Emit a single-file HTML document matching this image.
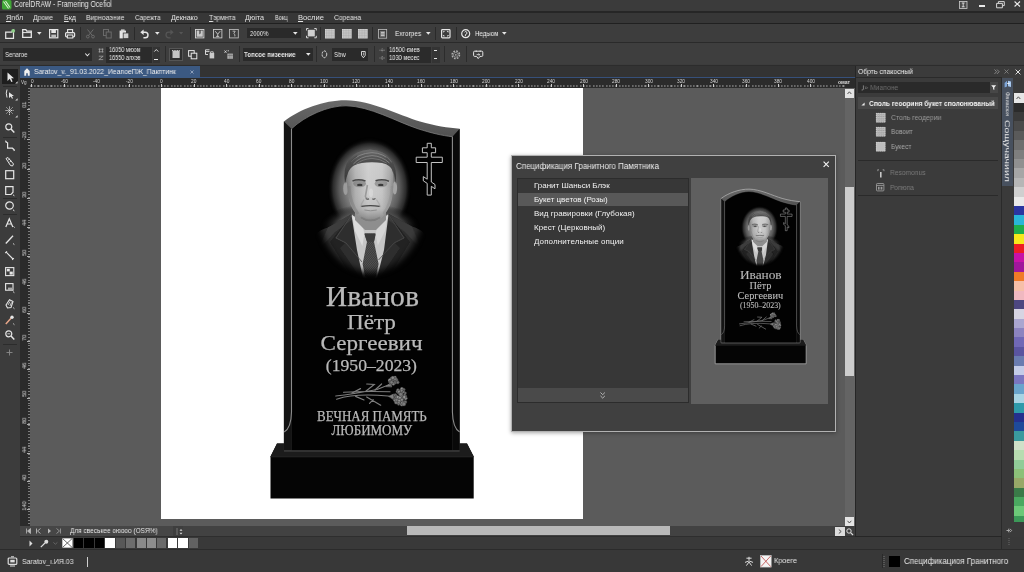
<!DOCTYPE html><html lang="ru"><head><meta charset="utf-8"><title>CorelDRAW</title><style>
html,body{margin:0;padding:0;}
body{width:1024px;height:572px;overflow:hidden;background:#3c3c3c;position:relative;font-family:"Liberation Sans",sans-serif;}
.t{position:absolute;white-space:nowrap;line-height:1;will-change:transform;}
.r{position:absolute;}
svg{position:absolute;overflow:visible;}
</style></head><body>
<div class="r" style="left:0px;top:0px;width:1024px;height:11px;background:#3b3b3b;"></div>
<div class="r" style="left:0px;top:11px;width:1024px;height:1.5px;background:#262626;"></div>
<svg style="left:2px;top:0px" width="10" height="10" viewBox="0 0 10 10"><rect x="0" y="0" width="9.5" height="9.5" rx="1.5" fill="#3fa535"/><path d="M1.5 1.5 L6.5 8.5 M3.5 1 L8 7.5" stroke="#d9f0d0" stroke-width="1.1" fill="none"/></svg>
<span class="t" style="left:14.00px;top:0.85px;font-size:8.2px;color:#e8e8e8;font-weight:normal;font-family:'Liberation Sans',sans-serif;transform-origin:0 50%;transform:scaleX(0.8391);">CorelDRAW - Framering Ocefiol</span>
<svg style="left:958.8px;top:0.7px" width="8.4" height="7.8" viewBox="0 0 8.4 7.8"><rect x="0.4" y="0.4" width="7.6" height="7" fill="#4a4a4a" stroke="#cfcfcf" stroke-width="0.8"/><path d="M2.8 2h2.8M4.2 2v3.8M2.8 5.8h2.8" stroke="#e0e0e0" stroke-width="0.9" fill="none"/></svg>
<div class="r" style="left:979.2px;top:5px;width:6px;height:1.5px;background:#e8e8e8;"></div>
<svg style="left:996px;top:0.6px" width="9" height="7.4" viewBox="0 0 9 7.4"><path d="M2.4 2.2V0.6H8.3V4.6H6.6M0.6 2.4H6.4V6.8H0.6Z" stroke="#d8d8d8" stroke-width="1" fill="none"/></svg>
<svg style="left:1013.6px;top:1.2px" width="6.6" height="6" viewBox="0 0 6.6 6"><path d="M0.6 0.5L6 5.5M6 0.5L0.6 5.5" stroke="#ececec" stroke-width="1.1" fill="none"/></svg>
<div class="r" style="left:0px;top:12.5px;width:1024px;height:10.5px;background:#373737;"></div>
<div class="r" style="left:0px;top:23px;width:1024px;height:1.3px;background:#202020;"></div>
<span class="t" style="left:5.70px;top:13.98px;font-size:7.2px;color:#e2e2e2;font-weight:normal;font-family:'Liberation Sans',sans-serif;letter-spacing:0.024px;"><u>Я</u>nбл</span>
<span class="t" style="left:33.00px;top:13.98px;font-size:7.2px;color:#e2e2e2;font-weight:normal;font-family:'Liberation Sans',sans-serif;transform-origin:0 50%;transform:scaleX(0.9565);">Дроие</span>
<span class="t" style="left:63.50px;top:13.98px;font-size:7.2px;color:#e2e2e2;font-weight:normal;font-family:'Liberation Sans',sans-serif;letter-spacing:-0.025px;"><u>Б</u>кд</span>
<span class="t" style="left:85.80px;top:13.98px;font-size:7.2px;color:#e2e2e2;font-weight:normal;font-family:'Liberation Sans',sans-serif;transform-origin:0 50%;transform:scaleX(0.9509);">Вирноаэние</span>
<span class="t" style="left:134.50px;top:13.98px;font-size:7.2px;color:#e2e2e2;font-weight:normal;font-family:'Liberation Sans',sans-serif;transform-origin:0 50%;transform:scaleX(0.8719);">Сарежта</span>
<span class="t" style="left:170.80px;top:13.98px;font-size:7.2px;color:#e2e2e2;font-weight:normal;font-family:'Liberation Sans',sans-serif;letter-spacing:-0.078px;">Декнако</span>
<span class="t" style="left:208.50px;top:13.98px;font-size:7.2px;color:#e2e2e2;font-weight:normal;font-family:'Liberation Sans',sans-serif;transform-origin:0 50%;transform:scaleX(0.9390);"><u>Т</u>эрмнта</span>
<span class="t" style="left:245.00px;top:13.98px;font-size:7.2px;color:#e2e2e2;font-weight:normal;font-family:'Liberation Sans',sans-serif;letter-spacing:-0.019px;">Дюіта</span>
<span class="t" style="left:274.90px;top:13.98px;font-size:7.2px;color:#e2e2e2;font-weight:normal;font-family:'Liberation Sans',sans-serif;transform-origin:0 50%;transform:scaleX(0.7835);">Вокц</span>
<span class="t" style="left:298.00px;top:13.98px;font-size:7.2px;color:#e2e2e2;font-weight:normal;font-family:'Liberation Sans',sans-serif;transform-origin:0 50%;transform:scaleX(1.0555);"><u>В</u>ослие</span>
<span class="t" style="left:334.00px;top:13.98px;font-size:7.2px;color:#e2e2e2;font-weight:normal;font-family:'Liberation Sans',sans-serif;transform-origin:0 50%;transform:scaleX(0.9248);">Сореана</span>
<div class="r" style="left:0px;top:24.3px;width:1024px;height:17.7px;background:#3d3d3d;"></div>
<div class="r" style="left:0px;top:42px;width:1024px;height:1.2px;background:#2a2a2a;"></div>
<div class="r" style="left:0px;top:43.2px;width:1024px;height:21.3px;background:#3e3e3e;"></div>
<div class="r" style="left:0px;top:64.5px;width:1024px;height:1px;background:#2c2c2c;"></div>
<div class="r" style="left:0px;top:65.5px;width:1024px;height:13px;background:#333333;"></div>
<div class="r" style="left:79.5px;top:27px;width:1px;height:13px;background:#2a2a2a;"></div>
<div class="r" style="left:134px;top:27px;width:1px;height:13px;background:#2a2a2a;"></div>
<div class="r" style="left:189.7px;top:27px;width:1px;height:13px;background:#2a2a2a;"></div>
<div class="r" style="left:320.4px;top:27px;width:1px;height:13px;background:#2a2a2a;"></div>
<div class="r" style="left:372.4px;top:27px;width:1px;height:13px;background:#2a2a2a;"></div>
<div class="r" style="left:435.4px;top:27px;width:1px;height:13px;background:#2a2a2a;"></div>
<div class="r" style="left:455.5px;top:27px;width:1px;height:13px;background:#2a2a2a;"></div>
<svg style="left:4.5px;top:28.5px" width="11" height="10" viewBox="0 0 11 10"><path d="M0.7 3.2H6.5L8.5 1.2V9.3H0.7Z" stroke="#e6e6e6" stroke-width="1.2" fill="none"/><circle cx="8.2" cy="1.8" r="1.9" fill="#8fd08a"/></svg>
<svg style="left:22px;top:29px" width="10" height="9" viewBox="0 0 10 9"><path d="M0.7 8.3V0.7H3.8L4.8 2.2H9.3V8.3Z" stroke="#e6e6e6" stroke-width="1.3" fill="none"/><path d="M0.7 3.6H9.3" stroke="#e6e6e6" stroke-width="1"/></svg>
<svg style="left:37px;top:32px" width="5" height="3" viewBox="0 0 5 3"><path d="M0 0H4.6L2.3 2.8Z" fill="#e6e6e6"/></svg>
<svg style="left:48.8px;top:29px" width="10" height="9.5" viewBox="0 0 10 9.5"><rect x="0.6" y="0.6" width="8.2" height="8.2" stroke="#e6e6e6" stroke-width="1.2" fill="none"/><rect x="2.3" y="0.8" width="4.6" height="3.2" fill="#e6e6e6"/><rect x="2.3" y="5.6" width="4.8" height="3" fill="#bbb"/></svg>
<svg style="left:64.8px;top:29px" width="10.5" height="9.5" viewBox="0 0 10.5 9.5"><rect x="2.6" y="0.6" width="5" height="3" stroke="#e6e6e6" stroke-width="1.1" fill="none"/><rect x="0.6" y="3.6" width="9" height="4.2" rx="1" stroke="#e6e6e6" stroke-width="1.2" fill="none"/><rect x="2.4" y="6" width="5.4" height="3" fill="#3d3d3d" stroke="#e6e6e6" stroke-width="1"/></svg>
<svg style="left:85.6px;top:29px" width="9" height="9.5" viewBox="0 0 9 9.5"><path d="M1.5 0.5L6.3 6.5M7.3 0.5L2.5 6.5" stroke="#6a6a6a" stroke-width="1"/><circle cx="1.8" cy="7.6" r="1.4" stroke="#6a6a6a" fill="none"/><circle cx="7" cy="7.6" r="1.4" stroke="#6a6a6a" fill="none"/></svg>
<svg style="left:102.6px;top:29px" width="9" height="9.5" viewBox="0 0 9 9.5"><rect x="0.5" y="0.5" width="5" height="6" stroke="#6a6a6a" fill="none"/><rect x="3.2" y="3" width="5" height="6" stroke="#6a6a6a" fill="#3d3d3d"/></svg>
<svg style="left:119px;top:28.8px" width="10.5" height="10" viewBox="0 0 10.5 10"><rect x="0.6" y="1.6" width="6.4" height="7.8" fill="#e6e6e6"/><rect x="2" y="0.4" width="3.6" height="2" fill="#cfcfcf"/><rect x="4.2" y="4" width="5.6" height="5.6" fill="#cfcfcf" stroke="#3d3d3d" stroke-width="0.8"/></svg>
<svg style="left:140.3px;top:28.6px" width="9" height="10" viewBox="0 0 9 10"><path d="M0.3 3.2L3.6 0.4V6Z" fill="#e6e6e6"/><path d="M3 3.2H5.2A2.7 2.7 0 0 1 5.2 8.8H3.4" stroke="#e6e6e6" stroke-width="1.4" fill="none"/></svg>
<svg style="left:154.5px;top:32px" width="5" height="3" viewBox="0 0 5 3"><path d="M0 0H4.6L2.3 2.8Z" fill="#e6e6e6"/></svg>
<svg style="left:164.8px;top:28.6px" width="9" height="10" viewBox="0 0 9 10"><path d="M8.7 3.2L5.4 0.4V6Z" fill="#555"/><path d="M6 3.2H3.8A2.7 2.7 0 0 0 3.8 8.8H5.6" stroke="#555" stroke-width="1.3" fill="none"/></svg>
<svg style="left:179px;top:32px" width="5" height="3" viewBox="0 0 5 3"><path d="M0 0H4.2L2.1 2.5Z" fill="#555"/></svg>
<svg style="left:194.7px;top:28.8px" width="9.5" height="9.5" viewBox="0 0 9.5 9.5"><rect x="0.5" y="0.5" width="8.4" height="8.4" stroke="#d8d8d8" stroke-width="0.9" fill="#3d3d3d"/><path d="M1.6 1.4H4.4V5.6L5.6 4.2V1.4H7.8V7.8H1.6Z" fill="#c8c8c8"/></svg>
<svg style="left:213px;top:28.8px" width="9.5" height="9.5" viewBox="0 0 9.5 9.5"><rect x="0.5" y="0.5" width="8.4" height="8.4" stroke="#cfcfcf" stroke-width="0.85" fill="none"/><path d="M2.2 2.2L4.7 5.2 7.2 2.2M4.7 5.2V7.4M3.2 7.4H6.2" stroke="#cfcfcf" stroke-width="0.9" fill="none"/></svg>
<svg style="left:229px;top:28.8px" width="10" height="9.5" viewBox="0 0 10 9.5"><rect x="0.5" y="0.5" width="8.8" height="8.4" stroke="#bdbdbd" stroke-width="0.85" fill="none"/><path d="M3.6 2.2H6.2L4.8 4.6Q6.6 5.4 5.8 7.4" stroke="#bdbdbd" stroke-width="0.9" fill="none"/></svg>
<div class="r" style="left:247px;top:28.1px;width:54px;height:10.4px;background:#2a2a2a;"></div>
<span class="t" style="left:249.50px;top:29.92px;font-size:7.7px;color:#e8e8e8;font-weight:normal;font-family:'Liberation Sans',sans-serif;transform-origin:0 50%;transform:scaleX(0.7716);">2000%</span>
<svg style="left:293.3px;top:32px" width="5" height="3" viewBox="0 0 5 3"><path d="M0 0H4.6L2.3 2.8Z" fill="#e6e6e6"/></svg>
<svg style="left:305.7px;top:28.2px" width="11" height="10.5" viewBox="0 0 11 10.5"><rect x="1.8" y="1.8" width="7" height="6.6" fill="#cfcfcf"/><path d="M0.5 2.5V0.5H2.5M8.3 0.5H10.3V2.5M10.3 7.8V9.8H8.3M2.5 9.8H0.5V7.8" stroke="#e6e6e6" stroke-width="0.9" fill="none"/></svg>
<svg style="left:325px;top:28.8px" width="9.7" height="9.5" viewBox="0 0 9.7 9.5"><rect x="0" y="0" width="9.7" height="9.5" fill="#d6d6d6"/><path d="M1.6 0V9.5M0 1.6H9.7" stroke="#8a8a8a" stroke-width="0.3"/><path d="M3.2 0V9.5M0 3.2H9.7" stroke="#8a8a8a" stroke-width="0.3"/><path d="M4.8 0V9.5M0 4.8H9.7" stroke="#8a8a8a" stroke-width="0.3"/><path d="M6.4 0V9.5M0 6.4H9.7" stroke="#8a8a8a" stroke-width="0.3"/><path d="M8.0 0V9.5M0 8.0H9.7" stroke="#8a8a8a" stroke-width="0.3"/></svg>
<svg style="left:341.8px;top:28.8px" width="9.7" height="9.5" viewBox="0 0 9.7 9.5"><rect x="0" y="0" width="9.7" height="9.5" fill="#d6d6d6"/><path d="M1.6 0V9.5M0 1.6H9.7" stroke="#8a8a8a" stroke-width="0.3"/><path d="M3.2 0V9.5M0 3.2H9.7" stroke="#8a8a8a" stroke-width="0.3"/><path d="M4.8 0V9.5M0 4.8H9.7" stroke="#8a8a8a" stroke-width="0.3"/><path d="M6.4 0V9.5M0 6.4H9.7" stroke="#8a8a8a" stroke-width="0.3"/><path d="M8.0 0V9.5M0 8.0H9.7" stroke="#8a8a8a" stroke-width="0.3"/></svg>
<svg style="left:358px;top:28.8px" width="9.7" height="9.5" viewBox="0 0 9.7 9.5"><rect x="0" y="0" width="9.7" height="9.5" fill="#d6d6d6"/><path d="M1.6 0V9.5M0 1.6H9.7" stroke="#8a8a8a" stroke-width="0.3"/><path d="M3.2 0V9.5M0 3.2H9.7" stroke="#8a8a8a" stroke-width="0.3"/><path d="M4.8 0V9.5M0 4.8H9.7" stroke="#8a8a8a" stroke-width="0.3"/><path d="M6.4 0V9.5M0 6.4H9.7" stroke="#8a8a8a" stroke-width="0.3"/><path d="M8.0 0V9.5M0 8.0H9.7" stroke="#8a8a8a" stroke-width="0.3"/></svg>
<svg style="left:377.8px;top:28.8px" width="9.2" height="9.7" viewBox="0 0 9.2 9.7"><rect x="0.5" y="0.5" width="8.2" height="8.7" stroke="#bdbdbd" stroke-width="0.8" fill="none"/><rect x="2.2" y="2" width="4.8" height="5.8" fill="#7c7c7c"/><path d="M3 3.5H6.5M3 5H6.5M3 6.5H6.5" stroke="#eee" stroke-width="0.6"/></svg>
<span class="t" style="left:394.70px;top:29.76px;font-size:8px;color:#ececec;font-weight:normal;font-family:'Liberation Sans',sans-serif;transform-origin:0 50%;transform:scaleX(0.8216);">Exrorpes</span>
<svg style="left:425.5px;top:32px" width="5" height="3" viewBox="0 0 5 3"><path d="M0 0H4.6L2.3 2.8Z" fill="#e6e6e6"/></svg>
<svg style="left:441px;top:28.8px" width="9.6" height="9.4" viewBox="0 0 9.6 9.4"><rect x="0.6" y="0.6" width="8.4" height="8.2" rx="0.8" stroke="#e6e6e6" stroke-width="1.2" fill="none"/><path d="M2.4 3.4V2.4H3.6M6 2.4H7.2V3.4M7.2 6V7H6M3.6 7H2.4V6" stroke="#e6e6e6" stroke-width="0.9" fill="none"/></svg>
<svg style="left:461px;top:28.7px" width="9.4" height="9.4" viewBox="0 0 9.4 9.4"><circle cx="4.7" cy="4.7" r="4" stroke="#e6e6e6" stroke-width="1.2" fill="none"/><path d="M3.6 3.2Q4.8 1.6 5.8 3.2T4.4 5.6V7.2" stroke="#e6e6e6" stroke-width="1" fill="none"/></svg>
<span class="t" style="left:474.60px;top:29.76px;font-size:8px;color:#ececec;font-weight:normal;font-family:'Liberation Sans',sans-serif;transform-origin:0 50%;transform:scaleX(0.7693);">Недыом</span>
<svg style="left:502.3px;top:32px" width="5" height="3" viewBox="0 0 5 3"><path d="M0 0H4.6L2.3 2.8Z" fill="#e6e6e6"/></svg>
<div class="r" style="left:164.5px;top:46px;width:1px;height:16px;background:#2c2c2c;"></div>
<div class="r" style="left:239.4px;top:46px;width:1px;height:16px;background:#2c2c2c;"></div>
<div class="r" style="left:315.8px;top:46px;width:1px;height:16px;background:#2c2c2c;"></div>
<div class="r" style="left:374.3px;top:46px;width:1px;height:16px;background:#2c2c2c;"></div>
<div class="r" style="left:444px;top:46px;width:1px;height:16px;background:#2c2c2c;"></div>
<div class="r" style="left:466.4px;top:46px;width:1px;height:16px;background:#2c2c2c;"></div>
<div class="r" style="left:3.3px;top:48px;width:89.2px;height:12.6px;background:#2a2a2a;"></div>
<span class="t" style="left:5.30px;top:51.01px;font-size:7.9px;color:#e6e6e6;font-weight:normal;font-family:'Liberation Sans',sans-serif;transform-origin:0 50%;transform:scaleX(0.7500);">Senaroe</span>
<svg style="left:85.3px;top:53px" width="5" height="4" viewBox="0 0 5 4"><path d="M0.3 0.5L2.4 2.8 4.5 0.5" stroke="#e6e6e6" stroke-width="1.1" fill="none"/></svg>
<svg style="left:98px;top:48px" width="7" height="13" viewBox="0 0 7 13"><path d="M0.5 1.2H5.5M0.5 3.8H5.5M1.5 0.5V4.5M4.5 0.5V4.5" stroke="#aaa" stroke-width="0.7"/><path d="M0.8 8.2H5.2L0.8 11.6H5.2" stroke="#aaa" stroke-width="0.7" fill="none"/></svg>
<div class="r" style="left:106.4px;top:46.6px;width:46px;height:16px;background:#2b2b2b;"></div>
<span class="t" style="left:109.00px;top:46.85px;font-size:6.7px;color:#f0f0f0;font-weight:normal;font-family:'Liberation Sans',sans-serif;transform-origin:0 50%;transform:scaleX(0.8218);">16050 мюом</span>
<span class="t" style="left:109.00px;top:55.05px;font-size:6.7px;color:#f0f0f0;font-weight:normal;font-family:'Liberation Sans',sans-serif;transform-origin:0 50%;transform:scaleX(0.8218);">16550 алхэв</span>
<div class="r" style="left:152.8px;top:46.6px;width:7px;height:16px;background:#343434;"></div>
<svg style="left:154px;top:48.5px" width="5" height="3" viewBox="0 0 5 3"><path d="M0.3 2.6L2.3 0.5 4.3 2.6" stroke="#e6e6e6" stroke-width="0.9" fill="none"/></svg>
<div class="r" style="left:154.3px;top:58.6px;width:4px;height:1.2px;background:#e6e6e6;"></div>
<div class="r" style="left:169px;top:47.6px;width:13.7px;height:13.6px;background:#2f2f2f;box-shadow:inset 0 0 0 1px #555;"></div>
<svg style="left:172px;top:50px" width="8.2" height="8.6" viewBox="0 0 8.2 8.6"><rect x="0.5" y="0.8" width="7.2" height="7.2" fill="#c4c4c4"/><path d="M0 0.6H8.2" stroke="#e6e6e6" stroke-width="0.9" stroke-dasharray="1 0.7"/></svg>
<svg style="left:188px;top:49.6px" width="9.5" height="9.5" viewBox="0 0 9.5 9.5"><rect x="0.6" y="0.6" width="5.6" height="5.6" stroke="#e6e6e6" stroke-width="1" fill="none"/><rect x="3.2" y="3.2" width="5.6" height="5.6" stroke="#e6e6e6" stroke-width="1" fill="#3e3e3e"/></svg>
<svg style="left:205.4px;top:49.2px" width="10" height="10" viewBox="0 0 10 10"><path d="M0.5 0.8H4.5M0.5 2.6H4.5M0.5 0.8V5.5H3" stroke="#e6e6e6" stroke-width="0.9" fill="none"/><rect x="4.6" y="4" width="4.6" height="5.4" fill="#ccc"/><path d="M5.6 4V2.8H8.2V4" stroke="#e6e6e6" stroke-width="0.8" fill="none"/></svg>
<svg style="left:224.3px;top:49.6px" width="9.5" height="9.5" viewBox="0 0 9.5 9.5"><path d="M0.5 0.5L2.5 2.8M2.5 0.5L0.5 2.8M3.6 0.8H5" stroke="#e6e6e6" stroke-width="0.8"/><rect x="3.4" y="3.6" width="5.4" height="5.2" fill="#bbb"/><path d="M3.4 5.4H8.8M5.2 3.6V8.8M7 3.6V8.8" stroke="#555" stroke-width="0.5"/></svg>
<div class="r" style="left:242.5px;top:48px;width:70px;height:12.6px;background:#2a2a2a;"></div>
<span class="t" style="left:244.40px;top:51.07px;font-size:7.8px;color:#e6e6e6;font-weight:bold;font-family:'Liberation Sans',sans-serif;transform-origin:0 50%;transform:scaleX(0.7920);">Топсое пизеение</span>
<svg style="left:305.7px;top:53.2px" width="5" height="3" viewBox="0 0 5 3"><path d="M0 0H4.6L2.3 2.8Z" fill="#e6e6e6"/></svg>
<svg style="left:320.6px;top:50.2px" width="7" height="8.6" viewBox="0 0 7 8.6"><ellipse cx="3.4" cy="4.3" rx="2.3" ry="3.4" stroke="#e6e6e6" stroke-width="1" fill="none" stroke-dasharray="2.2 1"/></svg>
<div class="r" style="left:331.9px;top:48px;width:36px;height:12.6px;background:#2a2a2a;"></div>
<span class="t" style="left:334.30px;top:51.12px;font-size:7.7px;color:#e6e6e6;font-weight:normal;font-family:'Liberation Sans',sans-serif;transform-origin:0 50%;transform:scaleX(0.7811);">Sbw</span>
<svg style="left:360.6px;top:51px" width="5" height="7.4" viewBox="0 0 5 7.4"><path d="M0.5 0.5H4.2V4.4L2.4 6.8 0.5 4.4Z" stroke="#e6e6e6" stroke-width="0.9" fill="none"/><path d="M2.4 1.5V4.5" stroke="#e6e6e6" stroke-width="0.7"/></svg>
<svg style="left:378.5px;top:48px" width="7" height="13" viewBox="0 0 7 13"><path d="M0.5 2.2H6M3.2 0.4V4.2" stroke="#aaa" stroke-width="0.7" stroke-dasharray="1 0.6"/><path d="M0.5 10H6M3.2 8V12" stroke="#aaa" stroke-width="0.7" stroke-dasharray="1 0.6"/></svg>
<div class="r" style="left:387px;top:46.6px;width:44.4px;height:16px;background:#2b2b2b;"></div>
<span class="t" style="left:389.30px;top:46.85px;font-size:6.7px;color:#f0f0f0;font-weight:normal;font-family:'Liberation Sans',sans-serif;transform-origin:0 50%;transform:scaleX(0.8575);">16500 ємев</span>
<span class="t" style="left:389.30px;top:55.05px;font-size:6.7px;color:#f0f0f0;font-weight:normal;font-family:'Liberation Sans',sans-serif;transform-origin:0 50%;transform:scaleX(0.8614);">1030 месес</span>
<div class="r" style="left:431.8px;top:46.6px;width:8.2px;height:16px;background:#343434;"></div>
<div class="r" style="left:433.8px;top:49.8px;width:3.6px;height:1px;background:#e0e0e0;"></div>
<div class="r" style="left:433.8px;top:58.4px;width:3.6px;height:1px;background:#e0e0e0;"></div>
<svg style="left:450.7px;top:49.6px" width="9.6" height="9.6" viewBox="0 0 9.6 9.6"><circle cx="4.8" cy="4.8" r="3.7" stroke="#b0b0b0" stroke-width="1.5" fill="none" stroke-dasharray="1.7 1.2"/><circle cx="4.8" cy="4.8" r="2.4" stroke="#a8a8a8" stroke-width="0.7" fill="none"/><circle cx="4.8" cy="4.8" r="0.9" fill="#a8a8a8"/></svg>
<svg style="left:473px;top:49.8px" width="10.4" height="9.4" viewBox="0 0 10.4 9.4"><path d="M1.6 1.2H8.8Q9.8 1.2 9.8 2.2V5.4Q9.8 6.4 8.8 6.4H7L5.2 8.6 3.6 6.4H1.6Q0.6 6.4 0.6 5.4V2.2Q0.6 1.2 1.6 1.2Z" stroke="#e6e6e6" stroke-width="1" fill="none"/><path d="M3.2 0.4V2M7.2 0.4V2M3.6 4.6H6.8M5.6 3.4L6.8 4.6 5.6 5.6" stroke="#e6e6e6" stroke-width="0.8" fill="none"/></svg>
<div class="r" style="left:20px;top:66px;width:180px;height:12.4px;background:#3b5982;"></div>
<svg style="left:24px;top:67.6px" width="6" height="8" viewBox="0 0 6 8"><path d="M3 0.3L5.7 3V7.7H3.8V5.2H2.2V7.7H0.3V3Z" fill="#f0f0f0"/></svg>
<span class="t" style="left:34.00px;top:68.48px;font-size:7.4px;color:#f0f0f0;font-weight:normal;font-family:'Liberation Sans',sans-serif;transform-origin:0 50%;transform:scaleX(0.9235);">Saratov_v._91.03.2022_ИeanoeПЖ_Пакптинк</span>
<svg style="left:189.6px;top:70.2px" width="4" height="4" viewBox="0 0 4 4"><path d="M0.5 0.5L3.5 3.5M3.5 0.5L0.5 3.5" stroke="#9fb0c8" stroke-width="0.8"/></svg>
<div class="r" style="left:200px;top:77.2px;width:655px;height:0.9px;background:#36507a;"></div>
<div class="r" style="left:0px;top:65.5px;width:20px;height:484px;background:#3c3c3c;"></div>
<div class="r" style="left:2.3px;top:68.5px;width:15.7px;height:15.2px;background:#1e1e1e;"></div>
<svg style="left:5.2px;top:71.8px" width="10" height="10" viewBox="0 0 10 10"><path d="M2.5 0.5V9L4.8 6.8 6.3 10 7.6 9.4 6.2 6.3H9Z" fill="#e6e6e6"/></svg>
<svg style="left:15.2px;top:80.8px" width="3" height="3" viewBox="0 0 3 3"><path d="M2.6 0.2V2.6H0.2Z" fill="#d8d8d8"/></svg>
<svg style="left:5.2px;top:89px" width="10" height="10" viewBox="0 0 10 10"><path d="M2 0.5Q0.5 4 2 8.5" stroke="#e6e6e6" stroke-width="1" fill="none"/><path d="M4 3.2V9L5.8 7.4 7 9.8 8 9.3 6.9 7H9Z" fill="#e6e6e6"/></svg>
<svg style="left:15.2px;top:98px" width="3" height="3" viewBox="0 0 3 3"><path d="M2.6 0.2V2.6H0.2Z" fill="#d8d8d8"/></svg>
<svg style="left:5.2px;top:106px" width="10" height="10" viewBox="0 0 10 10"><path d="M4.5 0.5V9M0.5 4.5H8.5M1.5 1.5L7.5 7.5M7.5 1.5L1.5 7.5" stroke="#e6e6e6" stroke-width="0.9" stroke-dasharray="1.2 0.6"/></svg>
<svg style="left:15.2px;top:115px" width="3" height="3" viewBox="0 0 3 3"><path d="M2.6 0.2V2.6H0.2Z" fill="#d8d8d8"/></svg>
<svg style="left:5.2px;top:123px" width="10" height="10" viewBox="0 0 10 10"><circle cx="3.8" cy="3.8" r="3" stroke="#e6e6e6" stroke-width="1.2" fill="none"/><path d="M6 6L9.3 9.5" stroke="#e6e6e6" stroke-width="1.5"/></svg>
<svg style="left:5.2px;top:141px" width="10" height="10" viewBox="0 0 10 10"><path d="M0.5 0.8L2.6 1.8V7.2H7.4L9.4 9" stroke="#e6e6e6" stroke-width="1.2" fill="none"/><path d="M0 0L1.6 0.4M8.6 9.6L10 9.2" stroke="#e6e6e6" stroke-width="0.9"/></svg>
<svg style="left:5.2px;top:157px" width="10" height="10" viewBox="0 0 10 10"><path d="M1 1.5L3 0.5 8.5 7 7.5 9 5.5 8.5Z" stroke="#e6e6e6" stroke-width="1" fill="none"/><path d="M3 3L5 2M4.5 5L6.5 4" stroke="#e6e6e6" stroke-width="0.8"/></svg>
<svg style="left:5.2px;top:170px" width="10" height="10" viewBox="0 0 10 10"><rect x="0.7" y="0.7" width="8" height="8" stroke="#e6e6e6" stroke-width="1.2" fill="none"/></svg>
<svg style="left:5.2px;top:186px" width="10" height="10" viewBox="0 0 10 10"><path d="M0.7 0.7H8V6.2L6 8.5H0.7Z" stroke="#e6e6e6" stroke-width="1.2" fill="none"/><path d="M8 8.8L9.4 9.8" stroke="#e6e6e6" stroke-width="1"/></svg>
<svg style="left:5.2px;top:201px" width="10" height="10" viewBox="0 0 10 10"><ellipse cx="4.5" cy="4.5" rx="3.8" ry="3.6" stroke="#e6e6e6" stroke-width="1.2" fill="none"/><path d="M8 8.8L9.4 9.8" stroke="#e6e6e6" stroke-width="1"/></svg>
<svg style="left:5.2px;top:217.6px" width="10" height="10" viewBox="0 0 10 10"><path d="M0.8 9L4.3 0.8 7.8 9M2.2 6H6.4" stroke="#e6e6e6" stroke-width="1.2" fill="none"/><path d="M8.6 8.4L9.6 9.6" stroke="#e6e6e6" stroke-width="0.9"/></svg>
<svg style="left:5.2px;top:235px" width="10" height="10" viewBox="0 0 10 10"><path d="M0.8 8.5L8 0.8" stroke="#e6e6e6" stroke-width="1.3"/><path d="M8 8.5L9.4 9.6" stroke="#e6e6e6" stroke-width="0.9"/></svg>
<svg style="left:5.2px;top:251px" width="10" height="10" viewBox="0 0 10 10"><path d="M1.2 1.2L8 8" stroke="#e6e6e6" stroke-width="1.1"/><path d="M0.3 2L2 0.3M7.2 8.8L8.8 7.2" stroke="#e6e6e6" stroke-width="1.1"/></svg>
<svg style="left:5.2px;top:267px" width="10" height="10" viewBox="0 0 10 10"><rect x="0.6" y="0.6" width="8.2" height="8" stroke="#e6e6e6" stroke-width="1.1" fill="none"/><rect x="1.8" y="1.8" width="3" height="2.6" fill="#e6e6e6"/><rect x="4.6" y="4.6" width="3.2" height="3" fill="#e6e6e6"/></svg>
<svg style="left:5.2px;top:283px" width="10" height="10" viewBox="0 0 10 10"><rect x="0.6" y="0.6" width="7.4" height="6.6" stroke="#e6e6e6" stroke-width="1.1" fill="none"/><rect x="3" y="4.6" width="4" height="2.8" fill="#aaa"/><path d="M8 8.6L9.4 9.7" stroke="#e6e6e6" stroke-width="0.9"/></svg>
<svg style="left:5.2px;top:299px" width="10" height="10" viewBox="0 0 10 10"><path d="M1 6L4.5 0.8 8 2.5 6 8.6 2.5 9Z" stroke="#e6e6e6" stroke-width="1.1" fill="none"/><path d="M3 6L5 2.5M5 7L6.5 3.4" stroke="#e6e6e6" stroke-width="0.8"/><path d="M8.2 8.6L9.4 9.7" stroke="#e6e6e6" stroke-width="0.9"/></svg>
<svg style="left:5.2px;top:315px" width="10" height="10" viewBox="0 0 10 10"><path d="M0.8 9L6 3.2" stroke="#e8a78a" stroke-width="1.5"/><circle cx="7" cy="2.2" r="1.7" fill="#e6e6e6"/><path d="M8.2 8.6L9.4 9.7" stroke="#e6e6e6" stroke-width="0.9"/></svg>
<svg style="left:5.2px;top:329.5px" width="10" height="10" viewBox="0 0 10 10"><circle cx="3.8" cy="3.8" r="3" stroke="#e6e6e6" stroke-width="1.2" fill="none"/><path d="M6 6L9.3 9.5" stroke="#e6e6e6" stroke-width="1.5"/><path d="M2.4 3.8H5.2" stroke="#e6e6e6" stroke-width="0.8"/></svg>
<svg style="left:5.2px;top:348px" width="10" height="10" viewBox="0 0 10 10"><path d="M4.5 1.5V7.5M1.5 4.5H7.5" stroke="#8a8a8a" stroke-width="0.9"/></svg>
<div class="r" style="left:3px;top:86px;width:14px;height:0.8px;background:#2c2c2c;"></div>
<div class="r" style="left:3px;top:137px;width:14px;height:0.8px;background:#2c2c2c;"></div>
<div class="r" style="left:3px;top:198px;width:14px;height:0.8px;background:#2c2c2c;"></div>
<div class="r" style="left:3px;top:214px;width:14px;height:0.8px;background:#2c2c2c;"></div>
<div class="r" style="left:3px;top:344px;width:14px;height:0.8px;background:#2c2c2c;"></div>
<div class="r" style="left:20px;top:526px;width:153px;height:10px;background:#464646;"></div>
<div class="r" style="left:173px;top:526px;width:682px;height:10px;background:#3e3e3e;"></div>
<div class="r" style="left:183px;top:526px;width:652px;height:10px;background:#424242;"></div>
<div class="r" style="left:407px;top:526.4px;width:263px;height:8.8px;background:#b9b9b9;"></div>
<svg style="left:26px;top:528px" width="5" height="6" viewBox="0 0 5 6"><path d="M0.5 0.5V5.5M4.5 0.5L1.5 3 4.5 5.5Z" stroke="#bbb" stroke-width="0.8" fill="#bbb"/></svg>
<svg style="left:36px;top:528px" width="5" height="6" viewBox="0 0 5 6"><path d="M0.5 0.5V5.5M4.5 0.5L1.5 3 4.5 5.5" stroke="#bbb" stroke-width="0.9" fill="none"/></svg>
<svg style="left:46.5px;top:528px" width="5" height="6" viewBox="0 0 5 6"><path d="M1 0.5L4 3 1 5.5Z" fill="#bbb"/></svg>
<svg style="left:56px;top:528px" width="5" height="6" viewBox="0 0 5 6"><path d="M0.5 0.5L3.5 3 0.5 5.5M4.5 0.5V5.5" stroke="#999" stroke-width="0.9" fill="none"/></svg>
<span class="t" style="left:70.30px;top:526.97px;font-size:7.6px;color:#e6e6e6;font-weight:normal;font-family:'Liberation Sans',sans-serif;transform-origin:0 50%;transform:scaleX(0.8554);">Для свеськее оюооо (OSЯ%)</span>
<svg style="left:176px;top:527.5px" width="7" height="8" viewBox="0 0 7 8"><path d="M1 0.5V7" stroke="#ccc" stroke-width="0.8" stroke-dasharray="1 1"/><path d="M3.5 2.8L5 1 6.5 2.8ZM3.5 4.8L5 6.6 6.5 4.8Z" fill="#ddd"/></svg>
<div class="r" style="left:835.4px;top:526.5px;width:9.4px;height:9px;background:#dcdcdc;"></div>
<svg style="left:838px;top:528.6px" width="4" height="5" viewBox="0 0 4 5"><path d="M0.8 0.5L3.2 2.5 0.8 4.5" stroke="#444" stroke-width="0.9" fill="none"/></svg>
<svg style="left:846px;top:527.5px" width="8" height="8" viewBox="0 0 8 8"><circle cx="3" cy="3" r="2.2" stroke="#ddd" stroke-width="1" fill="none"/><path d="M4.6 4.6L7 7" stroke="#ddd" stroke-width="1.2"/></svg>
<div class="r" style="left:20px;top:536px;width:1004px;height:13.4px;background:#393939;"></div>
<div class="r" style="left:20px;top:536px;width:835px;height:0.8px;background:#2e2e2e;"></div>
<svg style="left:29px;top:539.5px" width="4" height="7" viewBox="0 0 4 7"><path d="M0.5 0.5L3.5 3.5 0.5 6.5Z" fill="#ddd"/></svg>
<svg style="left:39.5px;top:538.5px" width="9" height="9" viewBox="0 0 9 9"><path d="M0.8 8.2L5 4" stroke="#ddd" stroke-width="1.2"/><circle cx="6.3" cy="2.7" r="2" fill="#ddd"/></svg>
<svg style="left:52.5px;top:541.5px" width="5" height="3" viewBox="0 0 5 3"><path d="M0.4 0.4L2.4 2.2 4.4 0.4" stroke="#6a6a6a" stroke-width="0.9" fill="none"/></svg>
<svg style="left:62.2px;top:538px" width="10.700000000000003" height="10" viewBox="0 0 10.700000000000003 10"><rect x="0.4" y="0.4" width="9.900000000000002" height="9.2" fill="#fff" stroke="#ccc" stroke-width="0.5"/><path d="M0.5 0.5L10.200000000000003 9.5M10.200000000000003 0.5L0.5 9.5" stroke="#444" stroke-width="0.8"/></svg>
<div class="r" style="left:73.6px;top:538px;width:9.700000000000003px;height:10px;background:#000;"></div>
<div class="r" style="left:84.3px;top:538px;width:9.700000000000003px;height:10px;background:#000;"></div>
<div class="r" style="left:94.7px;top:538px;width:9.700000000000003px;height:10px;background:#000;"></div>
<div class="r" style="left:105px;top:538px;width:9.799999999999997px;height:10px;background:#fff;"></div>
<div class="r" style="left:116px;top:538px;width:9px;height:10px;background:#585858;"></div>
<div class="r" style="left:126px;top:538px;width:9.199999999999989px;height:10px;background:#6d6d6d;"></div>
<div class="r" style="left:136.6px;top:538px;width:9.400000000000006px;height:10px;background:#8a8a8a;"></div>
<div class="r" style="left:146.8px;top:538px;width:9.399999999999977px;height:10px;background:#8e8e8e;"></div>
<div class="r" style="left:157px;top:538px;width:9.400000000000006px;height:10px;background:#6a6a6a;"></div>
<div class="r" style="left:167.6px;top:538px;width:9.400000000000006px;height:10px;background:#fff;"></div>
<div class="r" style="left:178px;top:538px;width:10px;height:10px;background:#fff;"></div>
<div class="r" style="left:189px;top:538px;width:9px;height:10px;background:#626262;"></div>
<div class="r" style="left:0px;top:549.4px;width:1024px;height:22.6px;background:#383838;"></div>
<div class="r" style="left:0px;top:549px;width:1024px;height:0.8px;background:#2b2b2b;"></div>
<svg style="left:6.5px;top:556px" width="11" height="11" viewBox="0 0 11 11"><rect x="1.2" y="2" width="8.6" height="6.4" rx="1" stroke="#ddd" stroke-width="1.2" fill="none"/><rect x="3.3" y="3.8" width="4.4" height="2.6" fill="#ddd"/><path d="M3 10H8M4 0.8H7" stroke="#ddd" stroke-width="1"/></svg>
<span class="t" style="left:22.00px;top:557.76px;font-size:8px;color:#e4e4e4;font-weight:normal;font-family:'Liberation Sans',sans-serif;transform-origin:0 50%;transform:scaleX(0.8713);">Saratov_ı.ИЯ.03</span>
<div class="r" style="left:86.7px;top:557px;width:1px;height:10px;background:#cfcfcf;"></div>
<svg style="left:743.5px;top:556px" width="10" height="11" viewBox="0 0 10 11"><path d="M5 0.8V4M2.4 2.2L7.6 2.2M1 6.4Q5 3.4 9 6.4M2.4 9.6L5 6 7.6 9.6" stroke="#ddd" stroke-width="1" fill="none"/></svg>
<svg style="left:759.5px;top:555.4px" width="11.7" height="12.6" viewBox="0 0 11.7 12.6"><rect x="0.5" y="0.5" width="10.7" height="11.6" fill="#f4f4f4" stroke="#ccc" stroke-width="0.6"/><path d="M1 1L10.7 11.6M10.7 1L1 11.6" stroke="#b44" stroke-width="0.8"/></svg>
<span class="t" style="left:774.40px;top:557.46px;font-size:8px;color:#e4e4e4;font-weight:normal;font-family:'Liberation Sans',sans-serif;transform-origin:0 50%;transform:scaleX(0.9128);">Кроеге</span>
<div class="r" style="left:881.5px;top:554px;width:1px;height:14px;background:#2a2a2a;"></div>
<svg style="left:882.8px;top:556px" width="2" height="11" viewBox="0 0 2 11"><path d="M1 0V11" stroke="#777" stroke-width="1" stroke-dasharray="1 1"/></svg>
<div class="r" style="left:889px;top:556px;width:11px;height:11px;background:#000;"></div>
<span class="t" style="left:904.00px;top:557.25px;font-size:8.4px;color:#e8e8e8;font-weight:normal;font-family:'Liberation Sans',sans-serif;transform-origin:0 50%;transform:scaleX(0.9549);">Спецификациоя Гранитного</span>
<div class="r" style="left:30px;top:88px;width:815px;height:438px;background:#5b5b5b;"></div>
<div class="r" style="left:20px;top:78.4px;width:835px;height:9.6px;background:#2b2b2b;"></div>
<div class="r" style="left:20px;top:88px;width:10px;height:438px;background:#2b2b2b;"></div>
<div class="r" style="left:30px;top:85.4px;width:816px;height:1.5px;background:repeating-linear-gradient(90deg,#909090 0,#909090 1.1px,transparent 1.1px,transparent 3.246px);background-position:1.4px 0;"></div>
<div class="r" style="left:31.4px;top:83.6px;width:1px;height:3.4px;background:#cfcfcf;"></div>
<span class="t" style="left:30.53px;top:80.26px;font-size:4.8px;color:#d4d4d4;font-weight:normal;font-family:'Liberation Sans',sans-serif;">0</span>
<div class="r" style="left:63.8px;top:83.6px;width:1px;height:3.4px;background:#cfcfcf;"></div>
<span class="t" style="left:60.85px;top:80.26px;font-size:4.8px;color:#d4d4d4;font-weight:normal;font-family:'Liberation Sans',sans-serif;">-60</span>
<div class="r" style="left:96.3px;top:83.6px;width:1px;height:3.4px;background:#cfcfcf;"></div>
<span class="t" style="left:93.31px;top:80.26px;font-size:4.8px;color:#d4d4d4;font-weight:normal;font-family:'Liberation Sans',sans-serif;">-40</span>
<div class="r" style="left:128.7px;top:83.6px;width:1px;height:3.4px;background:#cfcfcf;"></div>
<span class="t" style="left:125.77px;top:80.26px;font-size:4.8px;color:#d4d4d4;font-weight:normal;font-family:'Liberation Sans',sans-serif;">-20</span>
<div class="r" style="left:161.2px;top:83.6px;width:1px;height:3.4px;background:#cfcfcf;"></div>
<span class="t" style="left:160.37px;top:80.26px;font-size:4.8px;color:#d4d4d4;font-weight:normal;font-family:'Liberation Sans',sans-serif;">0</span>
<div class="r" style="left:193.7px;top:83.6px;width:1px;height:3.4px;background:#cfcfcf;"></div>
<span class="t" style="left:191.49px;top:80.26px;font-size:4.8px;color:#d4d4d4;font-weight:normal;font-family:'Liberation Sans',sans-serif;">20</span>
<div class="r" style="left:226.1px;top:83.6px;width:1px;height:3.4px;background:#cfcfcf;"></div>
<span class="t" style="left:223.95px;top:80.26px;font-size:4.8px;color:#d4d4d4;font-weight:normal;font-family:'Liberation Sans',sans-serif;">40</span>
<div class="r" style="left:258.6px;top:83.6px;width:1px;height:3.4px;background:#cfcfcf;"></div>
<span class="t" style="left:256.41px;top:80.26px;font-size:4.8px;color:#d4d4d4;font-weight:normal;font-family:'Liberation Sans',sans-serif;">60</span>
<div class="r" style="left:291.0px;top:83.6px;width:1px;height:3.4px;background:#cfcfcf;"></div>
<span class="t" style="left:288.87px;top:80.26px;font-size:4.8px;color:#d4d4d4;font-weight:normal;font-family:'Liberation Sans',sans-serif;">80</span>
<div class="r" style="left:323.5px;top:83.6px;width:1px;height:3.4px;background:#cfcfcf;"></div>
<span class="t" style="left:320.00px;top:80.26px;font-size:4.8px;color:#d4d4d4;font-weight:normal;font-family:'Liberation Sans',sans-serif;">100</span>
<div class="r" style="left:356.0px;top:83.6px;width:1px;height:3.4px;background:#cfcfcf;"></div>
<span class="t" style="left:352.46px;top:80.26px;font-size:4.8px;color:#d4d4d4;font-weight:normal;font-family:'Liberation Sans',sans-serif;">120</span>
<div class="r" style="left:388.4px;top:83.6px;width:1px;height:3.4px;background:#cfcfcf;"></div>
<span class="t" style="left:384.92px;top:80.26px;font-size:4.8px;color:#d4d4d4;font-weight:normal;font-family:'Liberation Sans',sans-serif;">140</span>
<div class="r" style="left:420.9px;top:83.6px;width:1px;height:3.4px;background:#cfcfcf;"></div>
<span class="t" style="left:417.38px;top:80.26px;font-size:4.8px;color:#d4d4d4;font-weight:normal;font-family:'Liberation Sans',sans-serif;">160</span>
<div class="r" style="left:453.3px;top:83.6px;width:1px;height:3.4px;background:#cfcfcf;"></div>
<span class="t" style="left:449.84px;top:80.26px;font-size:4.8px;color:#d4d4d4;font-weight:normal;font-family:'Liberation Sans',sans-serif;">180</span>
<div class="r" style="left:485.8px;top:83.6px;width:1px;height:3.4px;background:#cfcfcf;"></div>
<span class="t" style="left:482.30px;top:80.26px;font-size:4.8px;color:#d4d4d4;font-weight:normal;font-family:'Liberation Sans',sans-serif;">200</span>
<div class="r" style="left:518.3px;top:83.6px;width:1px;height:3.4px;background:#cfcfcf;"></div>
<span class="t" style="left:514.76px;top:80.26px;font-size:4.8px;color:#d4d4d4;font-weight:normal;font-family:'Liberation Sans',sans-serif;">220</span>
<div class="r" style="left:550.7px;top:83.6px;width:1px;height:3.4px;background:#cfcfcf;"></div>
<span class="t" style="left:547.22px;top:80.26px;font-size:4.8px;color:#d4d4d4;font-weight:normal;font-family:'Liberation Sans',sans-serif;">240</span>
<div class="r" style="left:583.2px;top:83.6px;width:1px;height:3.4px;background:#cfcfcf;"></div>
<span class="t" style="left:579.68px;top:80.26px;font-size:4.8px;color:#d4d4d4;font-weight:normal;font-family:'Liberation Sans',sans-serif;">260</span>
<div class="r" style="left:615.6px;top:83.6px;width:1px;height:3.4px;background:#cfcfcf;"></div>
<span class="t" style="left:612.14px;top:80.26px;font-size:4.8px;color:#d4d4d4;font-weight:normal;font-family:'Liberation Sans',sans-serif;">280</span>
<div class="r" style="left:648.1px;top:83.6px;width:1px;height:3.4px;background:#cfcfcf;"></div>
<span class="t" style="left:644.60px;top:80.26px;font-size:4.8px;color:#d4d4d4;font-weight:normal;font-family:'Liberation Sans',sans-serif;">300</span>
<div class="r" style="left:680.6px;top:83.6px;width:1px;height:3.4px;background:#cfcfcf;"></div>
<span class="t" style="left:677.06px;top:80.26px;font-size:4.8px;color:#d4d4d4;font-weight:normal;font-family:'Liberation Sans',sans-serif;">320</span>
<div class="r" style="left:713.0px;top:83.6px;width:1px;height:3.4px;background:#cfcfcf;"></div>
<span class="t" style="left:709.52px;top:80.26px;font-size:4.8px;color:#d4d4d4;font-weight:normal;font-family:'Liberation Sans',sans-serif;">340</span>
<div class="r" style="left:745.5px;top:83.6px;width:1px;height:3.4px;background:#cfcfcf;"></div>
<span class="t" style="left:741.98px;top:80.26px;font-size:4.8px;color:#d4d4d4;font-weight:normal;font-family:'Liberation Sans',sans-serif;">360</span>
<div class="r" style="left:777.9px;top:83.6px;width:1px;height:3.4px;background:#cfcfcf;"></div>
<span class="t" style="left:774.44px;top:80.26px;font-size:4.8px;color:#d4d4d4;font-weight:normal;font-family:'Liberation Sans',sans-serif;">380</span>
<div class="r" style="left:810.4px;top:83.6px;width:1px;height:3.4px;background:#cfcfcf;"></div>
<span class="t" style="left:806.90px;top:80.26px;font-size:4.8px;color:#d4d4d4;font-weight:normal;font-family:'Liberation Sans',sans-serif;">400</span>
<span class="t" style="left:838.30px;top:79.84px;font-size:5.2px;color:#d8d8d8;font-weight:bold;font-family:'Liberation Sans',sans-serif;letter-spacing:-0.081px;">омат</span>
<span class="t" style="left:21.00px;top:80.56px;font-size:4.6px;color:#cfcfcf;font-weight:normal;font-family:'Liberation Sans',sans-serif;">Vg</span>
<div class="r" style="left:28.4px;top:88px;width:1.2px;height:438px;background:repeating-linear-gradient(180deg,#7c7c7c 0,#7c7c7c 1px,transparent 1px,transparent 2.86px);"></div>
<div class="r" style="left:27px;top:108.8px;width:3px;height:1px;background:#b0b0b0;"></div>
<span class="t" style="left:19.5px;top:102.3px;font-size:5.6px;color:#d6d6d6;transform:rotate(-90deg);transform-origin:50% 50%;width:10px;text-align:center;">01</span>
<div class="r" style="left:27px;top:139px;width:3px;height:1px;background:#b0b0b0;"></div>
<span class="t" style="left:19.5px;top:132.5px;font-size:5.6px;color:#d6d6d6;transform:rotate(-90deg);transform-origin:50% 50%;width:10px;text-align:center;">-20</span>
<div class="r" style="left:27px;top:169px;width:3px;height:1px;background:#b0b0b0;"></div>
<span class="t" style="left:19.5px;top:162.5px;font-size:5.6px;color:#d6d6d6;transform:rotate(-90deg);transform-origin:50% 50%;width:10px;text-align:center;">20</span>
<div class="r" style="left:27px;top:198.3px;width:3px;height:1px;background:#b0b0b0;"></div>
<span class="t" style="left:19.5px;top:191.8px;font-size:5.6px;color:#d6d6d6;transform:rotate(-90deg);transform-origin:50% 50%;width:10px;text-align:center;">30</span>
<div class="r" style="left:27px;top:226.6px;width:3px;height:1px;background:#b0b0b0;"></div>
<span class="t" style="left:19.5px;top:220.1px;font-size:5.6px;color:#d6d6d6;transform:rotate(-90deg);transform-origin:50% 50%;width:10px;text-align:center;">44</span>
<div class="r" style="left:27px;top:256px;width:3px;height:1px;background:#b0b0b0;"></div>
<span class="t" style="left:19.5px;top:249.5px;font-size:5.6px;color:#d6d6d6;transform:rotate(-90deg);transform-origin:50% 50%;width:10px;text-align:center;">50</span>
<div class="r" style="left:27px;top:285px;width:3px;height:1px;background:#b0b0b0;"></div>
<span class="t" style="left:19.5px;top:278.5px;font-size:5.6px;color:#d6d6d6;transform:rotate(-90deg);transform-origin:50% 50%;width:10px;text-align:center;">46</span>
<div class="r" style="left:27px;top:313px;width:3px;height:1px;background:#b0b0b0;"></div>
<span class="t" style="left:19.5px;top:306.5px;font-size:5.6px;color:#d6d6d6;transform:rotate(-90deg);transform-origin:50% 50%;width:10px;text-align:center;">60</span>
<div class="r" style="left:27px;top:341px;width:3px;height:1px;background:#b0b0b0;"></div>
<span class="t" style="left:19.5px;top:334.5px;font-size:5.6px;color:#d6d6d6;transform:rotate(-90deg);transform-origin:50% 50%;width:10px;text-align:center;">70</span>
<div class="r" style="left:27px;top:369px;width:3px;height:1px;background:#b0b0b0;"></div>
<span class="t" style="left:19.5px;top:362.5px;font-size:5.6px;color:#d6d6d6;transform:rotate(-90deg);transform-origin:50% 50%;width:10px;text-align:center;">46</span>
<div class="r" style="left:27px;top:397.6px;width:3px;height:1px;background:#b0b0b0;"></div>
<span class="t" style="left:19.5px;top:391.1px;font-size:5.6px;color:#d6d6d6;transform:rotate(-90deg);transform-origin:50% 50%;width:10px;text-align:center;">50</span>
<div class="r" style="left:27px;top:424px;width:3px;height:1px;background:#b0b0b0;"></div>
<span class="t" style="left:19.5px;top:417.5px;font-size:5.6px;color:#d6d6d6;transform:rotate(-90deg);transform-origin:50% 50%;width:10px;text-align:center;">80</span>
<div class="r" style="left:27px;top:453px;width:3px;height:1px;background:#b0b0b0;"></div>
<span class="t" style="left:19.5px;top:446.5px;font-size:5.6px;color:#d6d6d6;transform:rotate(-90deg);transform-origin:50% 50%;width:10px;text-align:center;">44</span>
<div class="r" style="left:27px;top:481px;width:3px;height:1px;background:#b0b0b0;"></div>
<span class="t" style="left:19.5px;top:474.5px;font-size:5.6px;color:#d6d6d6;transform:rotate(-90deg);transform-origin:50% 50%;width:10px;text-align:center;">40</span>
<div class="r" style="left:27px;top:509px;width:3px;height:1px;background:#b0b0b0;"></div>
<span class="t" style="left:19.5px;top:502.5px;font-size:5.6px;color:#d6d6d6;transform:rotate(-90deg);transform-origin:50% 50%;width:10px;text-align:center;">140</span>
<div class="r" style="left:161px;top:88px;width:422px;height:430.6px;background:#ffffff;"></div>
<div class="r" style="left:845px;top:88px;width:10px;height:438px;background:#646464;"></div>
<div class="r" style="left:845px;top:88.6px;width:9.2px;height:9.2px;background:#e4e4e4;"></div>
<svg style="left:847.4px;top:91.2px" width="5" height="4" viewBox="0 0 5 4"><path d="M0.5 3L2.4 0.8 4.3 3" stroke="#444" stroke-width="0.9" fill="none"/></svg>
<div class="r" style="left:845px;top:186.6px;width:9.2px;height:189.2px;background:#cdcdcd;"></div>
<div class="r" style="left:845px;top:516.6px;width:9.4px;height:9.4px;background:#e4e4e4;"></div>
<svg style="left:847.4px;top:519.6px" width="5" height="4" viewBox="0 0 5 4"><path d="M0.5 0.8L2.4 3 4.3 0.8" stroke="#444" stroke-width="0.9" fill="none"/></svg>
<svg style="left:0;top:0" width="1024" height="572" viewBox="0 0 1024 572"><defs>
<radialGradient id="glowa" cx="50%" cy="50%" r="50%"><stop offset="0" stop-color="#8a8a8a"/><stop offset="0.55" stop-color="#7c7c7c"/><stop offset="0.72" stop-color="#5a5a5a"/><stop offset="0.87" stop-color="#2a2a2a"/><stop offset="1" stop-color="#000" stop-opacity="0"/></radialGradient>
<radialGradient id="glow2a" cx="50%" cy="50%" r="50%"><stop offset="0" stop-color="#7c7c7c"/><stop offset="0.6" stop-color="#5c5c5c"/><stop offset="1" stop-color="#000" stop-opacity="0"/></radialGradient>
<linearGradient id="faceva" x1="0" y1="0" x2="0" y2="1"><stop offset="0" stop-color="#ddd" stop-opacity="0.35"/><stop offset="0.45" stop-color="#ccc" stop-opacity="0"/><stop offset="0.8" stop-color="#555" stop-opacity="0.12"/><stop offset="1" stop-color="#333" stop-opacity="0.5"/></linearGradient>
<linearGradient id="haira" x1="0" y1="0" x2="0" y2="1"><stop offset="0" stop-color="#6c6c6c"/><stop offset="0.3" stop-color="#505050"/><stop offset="1" stop-color="#343434"/></linearGradient>
<pattern id="tiea" width="1.6" height="1.6" patternUnits="userSpaceOnUse" patternTransform="rotate(40)"><rect width="1.6" height="1.6" fill="#3a3a3a"/><rect width="0.7" height="1.6" fill="#565656"/></pattern>
<radialGradient id="viga" cx="50%" cy="50%" r="50%"><stop offset="0" stop-color="#fff"/><stop offset="0.78" stop-color="#fff"/><stop offset="1" stop-color="#000"/></radialGradient>
<linearGradient id="facea" x1="0" y1="0" x2="1" y2="0"><stop offset="0" stop-color="#7c7c7c"/><stop offset="0.18" stop-color="#b0b0b0"/><stop offset="0.45" stop-color="#cdcdcd"/><stop offset="0.75" stop-color="#c6c6c6"/><stop offset="0.92" stop-color="#a4a4a4"/><stop offset="1" stop-color="#888"/></linearGradient>
<linearGradient id="beva" x1="0" y1="0" x2="0" y2="1"><stop offset="0" stop-color="#6a6a6a"/><stop offset="0.1" stop-color="#525252"/><stop offset="1" stop-color="#4a4a4a"/></linearGradient>
<filter id="b1a" x="-10%" y="-10%" width="120%" height="120%"><feGaussianBlur stdDeviation="0.55"/></filter>
<filter id="b2a" x="-20%" y="-20%" width="140%" height="140%"><feGaussianBlur stdDeviation="3"/></filter>
<mask id="pma"><ellipse cx="370.5" cy="206" rx="53" ry="66" fill="#fff" filter="url(#b2a)"/></mask>
</defs>
<path d="M277 443.4H467L473.7 456.5V498.5H270.5V456.5Z" fill="#050505"/>
<path d="M277 443.4H467L473.7 456.5H270.5Z" fill="#1c1c1c"/>
<path d="M270.5 456.8H473.7" stroke="#2e2e2e" stroke-width="0.8"/>
<path d="M283.9 450.5V121.5C300 109 325 100 346 100.3C372 100.6 398 115 420 121.5C435 125.8 448 127.8 459.7 128.8V450.5Z" fill="url(#beva)"/>
<path d="M283.9 450.5V121.5L291.5 128.8V450.5Z" fill="#141414"/>
<path d="M459.7 450.5V128.8L452.4 136.7V450.5Z" fill="#090909"/>
<path d="M291.5 450.5V128.8C305 116 328 105.6 346 105.8C370 106.2 396 121.5 418 128.8C432 133.2 442 135.6 452.4 136.7V450.5Z" fill="#020202"/>
<path d="M291.5 128.8C305 116 328 105.6 346 105.8C370 106.2 396 121.5 418 128.8C432 133.2 442 135.6 452.4 136.7" stroke="#868686" stroke-width="0.7" fill="none"/>
<path d="M291.5 128.8V412Q291.2 428 284.2 432" stroke="#8c8c8c" stroke-width="1.1" fill="none"/>
<path d="M452.4 136.7V412Q452.8 428 459.6 432" stroke="#8c8c8c" stroke-width="1.1" fill="none"/>
<path d="M284 451H459.6" stroke="#555" stroke-width="0.8"/>
<g mask="url(#pma)">
<ellipse cx="369.5" cy="188" rx="42" ry="51" fill="url(#glowa)"/>
<ellipse cx="370" cy="226" rx="50" ry="22" fill="url(#glow2a)"/>
<g filter="url(#b1a)">
<path d="M310 292V246Q312 232 328 227.5L351 214.5 370 240 389 214 412 226.5Q428 231 430 246V292Z" fill="#2f2f2f"/>
<path d="M328 227.5L351 214.5 353 219 335 232 318 250Z" fill="#3e3e3e"/><path d="M412 226.5L389 214 387 219 405 232 422 250Z" fill="#3a3a3a"/>
<path d="M351.5 215L370 224 388.5 214.5 384 250 377 278H363L357 250Z" fill="#c6c6c6"/>
<path d="M351.5 215L335 238 345 243 340 248 366 286H357L330 242Z" fill="#222"/><path d="M388.5 214.5L405 238 395 243 400 248 374 286H383L410 242Z" fill="#202020"/>
<path d="M351.5 215L336 238 346 243 362 262" stroke="#4c4c4c" stroke-width="0.8" fill="none"/><path d="M388.5 214.5L404 238 394 243 378.5 260" stroke="#484848" stroke-width="0.8" fill="none"/>
<path d="M364.3 233.4H375.7L374 241.8 378.6 264 376 276 370.5 282 365 276 362.6 264 367 241.8Z" fill="url(#tiea)"/><path d="M364.3 233.4H375.7L374 241.8H367Z" fill="#3c3c3c"/>
<path d="M352 214.6L363 228 364.4 233.6 362.4 246 355 231Z" fill="#dcdcdc"/><path d="M388 214.2L377 228 375.6 233.6 377.8 245.5 385 231Z" fill="#d6d6d6"/>
<path d="M355 204H386V220L376 230H365L355 220Z" fill="#8e8e8e"/>
<ellipse cx="345.6" cy="188.5" rx="2.4" ry="6.5" fill="#9c9c9c"/><ellipse cx="394.8" cy="188" rx="2.3" ry="6.5" fill="#a4a4a4"/>
<path d="M347.2 178Q346.5 159.5 370 158.5Q393.8 159.5 393.4 178Q393.8 195 390.2 205Q385 217 377 220.4Q370.4 222.4 364 220.4Q356 217 350.6 205Q346.8 195 347.2 178Z" fill="url(#facea)"/>
<path d="M347.2 178Q346.5 159.5 370 158.5Q393.8 159.5 393.4 178Q393.8 195 390.2 205Q385 217 377 220.4Q370.4 222.4 364 220.4Q356 217 350.6 205Q346.8 195 347.2 178Z" fill="url(#faceva)"/>
<path d="M345 184Q340.5 152 370 149.6Q399.5 152 395.6 184Q395 174 391.5 168.5Q388 163 377 162.4Q362 161.6 354 165.4Q349.6 168 348 173Q346 178 345 184Z" fill="url(#haira)"/>
<path d="M351 162Q358 153.4 372 152.6Q384 153 391.6 162" stroke="#8e8e8e" stroke-width="1" fill="none" opacity="0.8"/>
<path d="M353.4 164Q360 156.4 372 155.6Q382 156 389.4 163" stroke="#9a9a9a" stroke-width="0.9" fill="none" opacity="0.7"/>
<path d="M356 164.4Q362 159 372 158.4Q380 158.6 386.6 163" stroke="#848484" stroke-width="0.9" fill="none" opacity="0.7"/>
<path d="M348 170Q349 161 357 156" stroke="#484848" stroke-width="1.3" fill="none" opacity="0.8"/>
<path d="M393.4 172Q393 163 386 157.4" stroke="#4c4c4c" stroke-width="1.2" fill="none" opacity="0.7"/>
<ellipse cx="359.6" cy="183.6" rx="6.4" ry="3.6" fill="#747474" opacity="0.6"/><ellipse cx="381" cy="183.6" rx="6.4" ry="3.6" fill="#747474" opacity="0.55"/>
<path d="M352.5 181Q358.5 178.6 365.5 181M375.5 180.8Q382 178.6 389 181.2" stroke="#4a4a4a" stroke-width="1.5" fill="none"/>
<ellipse cx="359.8" cy="184.9" rx="2.8" ry="1.2" fill="#3a3a3a"/><ellipse cx="380.8" cy="184.9" rx="2.8" ry="1.2" fill="#3a3a3a"/>
<path d="M367.4 185Q366.4 191 365.4 196.4Q365.6 198.2 367.6 198.6" stroke="#8e8e8e" stroke-width="1.6" fill="none" opacity="0.8"/><path d="M365.8 198.6Q367.4 199.8 369 198.8M372.4 198.8Q374 199.8 375.4 198.4" stroke="#505050" stroke-width="1.1" fill="none"/><ellipse cx="371" cy="193" rx="2" ry="4.4" fill="#dcdcdc" opacity="0.7"/>
<path d="M364 199.6Q361.6 203 360.4 207M376.4 199.6Q379 203 380.6 207" stroke="#9a9a9a" stroke-width="1.2" fill="none" opacity="0.55"/>
<path d="M361.4 206.4Q370.4 205 379.6 206.4" stroke="#454545" stroke-width="1.25" fill="none"/><path d="M364.4 210Q370.4 211.6 376.8 210" stroke="#8e8e8e" stroke-width="1" fill="none"/>
<path d="M349 186Q349.5 202 358 214" stroke="#7a7a7a" stroke-width="3" fill="none" opacity="0.45"/><path d="M392 186Q391.5 202 383.5 214" stroke="#8a8a8a" stroke-width="2.4" fill="none" opacity="0.35"/>
<path d="M361 217.5Q370.4 223.5 380 217.5" stroke="#777" stroke-width="2" fill="none" opacity="0.6"/>
</g></g>
<path d="M427.2 143.3H431.3V147.8H435.6V152.7H431.3V157.2H442.3V162.5H431.3V182L435 184.5V188.8L431.3 186.3V195.1H427.2V183.4L423.3 180.8V176.6L427.2 179.2V162.5H416.2V157.2H427.2V152.7H422.4V147.8H427.2Z" stroke="#cdcdcd" stroke-width="0.95" fill="none"/>
<text x="325.8" y="306.3" textLength="93.2" lengthAdjust="spacingAndGlyphs" style="font-family:'Liberation Serif',serif;font-size:29.8px" fill="#b9b9b9" stroke="#b9b9b9" stroke-width="0.25">Иванов</text>
<text x="346.9" y="329" textLength="49.1" lengthAdjust="spacingAndGlyphs" style="font-family:'Liberation Serif',serif;font-size:22px" fill="#b9b9b9" stroke="#b9b9b9" stroke-width="0.25">Пётр</text>
<text x="320.5" y="350.2" textLength="102" lengthAdjust="spacingAndGlyphs" style="font-family:'Liberation Serif',serif;font-size:21.6px" fill="#b9b9b9" stroke="#b9b9b9" stroke-width="0.25">Сергеевич</text>
<text x="325.8" y="370.5" textLength="91.2" lengthAdjust="spacingAndGlyphs" style="font-family:'Liberation Serif',serif;font-size:16.8px" fill="#b9b9b9" stroke="#b9b9b9" stroke-width="0.25">(1950–2023)</text>
<g transform="translate(0,0)" stroke="#7e7e7e" fill="none" stroke-width="1.1" stroke-linecap="round"><path d="M335.7 396Q352 394.4 377 389.5L389 384.8M336.6 399.2Q355 393 388 396L392.7 397M343.5 392.3Q366 391 390 391.8"/><path d="M365.8 391.3L374.2 384.4 366.7 384M375 390L381.6 384M355.6 396.4L364 400M366.7 397L380.7 405.2M373.2 399.7L369.5 403.4M352 393L360.5 388.6" stroke-width="1.2"/><path d="M386 386.4L390.6 383 391.6 386.6ZM389 396.2L393.6 394 393.6 399.4Z" fill="#808080" stroke-width="0.6"/><g stroke-linecap="butt"><circle cx="393.2" cy="382.5" r="1.7" fill="#8a8a8a" stroke="#2c2c2c" stroke-width="0.35"/><circle cx="394.6" cy="379.6" r="1.6" fill="#7c7c7c" stroke="#2c2c2c" stroke-width="0.35"/><circle cx="396.9" cy="381.6" r="1.2" fill="#8a8a8a" stroke="#2c2c2c" stroke-width="0.35"/><circle cx="392.9" cy="380.5" r="1.6" fill="#7c7c7c" stroke="#2c2c2c" stroke-width="0.35"/><circle cx="391.6" cy="378.3" r="1.2" fill="#6e6e6e" stroke="#2c2c2c" stroke-width="0.35"/><circle cx="396.1" cy="381.6" r="1.6" fill="#7c7c7c" stroke="#2c2c2c" stroke-width="0.35"/><circle cx="393.6" cy="382.6" r="1.2" fill="#969696" stroke="#2c2c2c" stroke-width="0.35"/><circle cx="390.5" cy="379.5" r="1.2" fill="#7c7c7c" stroke="#2c2c2c" stroke-width="0.35"/><circle cx="391.6" cy="383.3" r="1.2" fill="#8a8a8a" stroke="#2c2c2c" stroke-width="0.35"/><circle cx="391.6" cy="378.7" r="1.6" fill="#969696" stroke="#2c2c2c" stroke-width="0.35"/><circle cx="389.7" cy="381.8" r="1.4" fill="#7c7c7c" stroke="#2c2c2c" stroke-width="0.35"/><circle cx="395.1" cy="377.2" r="1.3" fill="#969696" stroke="#2c2c2c" stroke-width="0.35"/><circle cx="389.8" cy="380.2" r="1.8" fill="#969696" stroke="#2c2c2c" stroke-width="0.35"/><circle cx="393.0" cy="380.1" r="1.6" fill="#7c7c7c" stroke="#2c2c2c" stroke-width="0.35"/><circle cx="394.1" cy="379.1" r="1.5" fill="#8a8a8a" stroke="#2c2c2c" stroke-width="0.35"/><circle cx="395.2" cy="380.6" r="1.6" fill="#969696" stroke="#2c2c2c" stroke-width="0.35"/><circle cx="392.5" cy="383.2" r="1.5" fill="#6e6e6e" stroke="#2c2c2c" stroke-width="0.35"/><circle cx="395.3" cy="381.5" r="1.3" fill="#8a8a8a" stroke="#2c2c2c" stroke-width="0.35"/><circle cx="397.6" cy="382.3" r="1.7" fill="#6e6e6e" stroke="#2c2c2c" stroke-width="0.35"/><circle cx="393.4" cy="383.7" r="1.7" fill="#8a8a8a" stroke="#2c2c2c" stroke-width="0.35"/><circle cx="396.6" cy="379.9" r="1.6" fill="#6e6e6e" stroke="#2c2c2c" stroke-width="0.35"/><circle cx="397.8" cy="382.4" r="1.2" fill="#7c7c7c" stroke="#2c2c2c" stroke-width="0.35"/><circle cx="390.5" cy="383.5" r="1.5" fill="#7c7c7c" stroke="#2c2c2c" stroke-width="0.35"/><circle cx="390.8" cy="382.0" r="1.9" fill="#6e6e6e" stroke="#2c2c2c" stroke-width="0.35"/><circle cx="395.6" cy="379.1" r="1.5" fill="#969696" stroke="#2c2c2c" stroke-width="0.35"/><circle cx="392.8" cy="378.3" r="1.3" fill="#8a8a8a" stroke="#2c2c2c" stroke-width="0.35"/><circle cx="395.0" cy="382.9" r="1.3" fill="#6e6e6e" stroke="#2c2c2c" stroke-width="0.35"/><circle cx="395.0" cy="379.2" r="1.4" fill="#7c7c7c" stroke="#2c2c2c" stroke-width="0.35"/><circle cx="391.6" cy="382.3" r="1.6" fill="#7c7c7c" stroke="#2c2c2c" stroke-width="0.35"/><circle cx="392.8" cy="377.8" r="1.7" fill="#8a8a8a" stroke="#2c2c2c" stroke-width="0.35"/><circle cx="395.6" cy="399.6" r="2.0" fill="#6e6e6e" stroke="#2c2c2c" stroke-width="0.35"/><circle cx="397.8" cy="400.7" r="1.5" fill="#6e6e6e" stroke="#2c2c2c" stroke-width="0.35"/><circle cx="401.9" cy="398.1" r="1.3" fill="#7c7c7c" stroke="#2c2c2c" stroke-width="0.35"/><circle cx="403.9" cy="401.8" r="1.2" fill="#7c7c7c" stroke="#2c2c2c" stroke-width="0.35"/><circle cx="395.3" cy="395.1" r="1.7" fill="#8a8a8a" stroke="#2c2c2c" stroke-width="0.35"/><circle cx="403.7" cy="392.0" r="1.2" fill="#969696" stroke="#2c2c2c" stroke-width="0.35"/><circle cx="404.8" cy="395.2" r="1.5" fill="#8a8a8a" stroke="#2c2c2c" stroke-width="0.35"/><circle cx="403.8" cy="389.6" r="1.5" fill="#6e6e6e" stroke="#2c2c2c" stroke-width="0.35"/><circle cx="399.8" cy="400.5" r="1.8" fill="#969696" stroke="#2c2c2c" stroke-width="0.35"/><circle cx="396.0" cy="398.2" r="1.6" fill="#7c7c7c" stroke="#2c2c2c" stroke-width="0.35"/><circle cx="404.5" cy="395.1" r="1.2" fill="#8a8a8a" stroke="#2c2c2c" stroke-width="0.35"/><circle cx="400.8" cy="392.1" r="1.7" fill="#8a8a8a" stroke="#2c2c2c" stroke-width="0.35"/><circle cx="399.7" cy="392.7" r="1.4" fill="#7c7c7c" stroke="#2c2c2c" stroke-width="0.35"/><circle cx="399.0" cy="400.7" r="1.6" fill="#969696" stroke="#2c2c2c" stroke-width="0.35"/><circle cx="397.7" cy="391.6" r="1.8" fill="#7c7c7c" stroke="#2c2c2c" stroke-width="0.35"/><circle cx="402.3" cy="389.2" r="1.8" fill="#7c7c7c" stroke="#2c2c2c" stroke-width="0.35"/><circle cx="401.8" cy="403.5" r="1.8" fill="#8a8a8a" stroke="#2c2c2c" stroke-width="0.35"/><circle cx="401.6" cy="390.9" r="1.3" fill="#969696" stroke="#2c2c2c" stroke-width="0.35"/><circle cx="395.5" cy="400.2" r="2.0" fill="#969696" stroke="#2c2c2c" stroke-width="0.35"/><circle cx="402.2" cy="398.7" r="1.5" fill="#969696" stroke="#2c2c2c" stroke-width="0.35"/><circle cx="401.9" cy="404.3" r="1.9" fill="#8a8a8a" stroke="#2c2c2c" stroke-width="0.35"/><circle cx="396.1" cy="398.2" r="1.8" fill="#8a8a8a" stroke="#2c2c2c" stroke-width="0.35"/><circle cx="401.6" cy="394.4" r="1.4" fill="#7c7c7c" stroke="#2c2c2c" stroke-width="0.35"/><circle cx="398.3" cy="397.7" r="1.8" fill="#969696" stroke="#2c2c2c" stroke-width="0.35"/><circle cx="405.3" cy="401.9" r="1.7" fill="#6e6e6e" stroke="#2c2c2c" stroke-width="0.35"/><circle cx="396.2" cy="402.5" r="1.8" fill="#7c7c7c" stroke="#2c2c2c" stroke-width="0.35"/><circle cx="401.5" cy="397.1" r="1.6" fill="#6e6e6e" stroke="#2c2c2c" stroke-width="0.35"/><circle cx="401.3" cy="393.8" r="1.8" fill="#6e6e6e" stroke="#2c2c2c" stroke-width="0.35"/><circle cx="398.8" cy="392.6" r="1.6" fill="#7c7c7c" stroke="#2c2c2c" stroke-width="0.35"/><circle cx="405.6" cy="398.3" r="1.8" fill="#8a8a8a" stroke="#2c2c2c" stroke-width="0.35"/><circle cx="395.3" cy="395.7" r="1.5" fill="#7c7c7c" stroke="#2c2c2c" stroke-width="0.35"/><circle cx="401.8" cy="393.4" r="1.3" fill="#969696" stroke="#2c2c2c" stroke-width="0.35"/><circle cx="395.7" cy="397.1" r="1.4" fill="#6e6e6e" stroke="#2c2c2c" stroke-width="0.35"/><circle cx="401.3" cy="395.2" r="1.8" fill="#6e6e6e" stroke="#2c2c2c" stroke-width="0.35"/><circle cx="398.0" cy="390.0" r="1.6" fill="#7c7c7c" stroke="#2c2c2c" stroke-width="0.35"/><circle cx="396.6" cy="395.8" r="1.1" fill="#6e6e6e" stroke="#2c2c2c" stroke-width="0.35"/><circle cx="401.3" cy="390.0" r="1.8" fill="#7c7c7c" stroke="#2c2c2c" stroke-width="0.35"/><circle cx="402.4" cy="402.9" r="1.8" fill="#8a8a8a" stroke="#2c2c2c" stroke-width="0.35"/><circle cx="398.7" cy="403.2" r="1.6" fill="#8a8a8a" stroke="#2c2c2c" stroke-width="0.35"/><circle cx="401.6" cy="395.7" r="1.3" fill="#8a8a8a" stroke="#2c2c2c" stroke-width="0.35"/><circle cx="401.2" cy="390.6" r="1.6" fill="#8a8a8a" stroke="#2c2c2c" stroke-width="0.35"/><circle cx="396.5" cy="399.8" r="1.6" fill="#7c7c7c" stroke="#2c2c2c" stroke-width="0.35"/><circle cx="399.3" cy="391.3" r="1.6" fill="#6e6e6e" stroke="#2c2c2c" stroke-width="0.35"/><circle cx="397.8" cy="397.0" r="1.6" fill="#969696" stroke="#2c2c2c" stroke-width="0.35"/><circle cx="405.3" cy="393.1" r="1.3" fill="#6e6e6e" stroke="#2c2c2c" stroke-width="0.35"/><circle cx="401.9" cy="399.7" r="1.5" fill="#8a8a8a" stroke="#2c2c2c" stroke-width="0.35"/><circle cx="398.9" cy="391.8" r="1.3" fill="#969696" stroke="#2c2c2c" stroke-width="0.35"/><circle cx="401.7" cy="388.5" r="1.2" fill="#969696" stroke="#2c2c2c" stroke-width="0.35"/><circle cx="403.9" cy="404.1" r="2.0" fill="#7c7c7c" stroke="#2c2c2c" stroke-width="0.35"/><circle cx="400.6" cy="394.3" r="1.9" fill="#7c7c7c" stroke="#2c2c2c" stroke-width="0.35"/><circle cx="405.7" cy="396.7" r="1.2" fill="#6e6e6e" stroke="#2c2c2c" stroke-width="0.35"/><circle cx="404.2" cy="397.0" r="1.5" fill="#969696" stroke="#2c2c2c" stroke-width="0.35"/><circle cx="398.6" cy="404.5" r="1.1" fill="#6e6e6e" stroke="#2c2c2c" stroke-width="0.35"/><circle cx="399.9" cy="397.7" r="1.4" fill="#969696" stroke="#2c2c2c" stroke-width="0.35"/></g></g>
<text x="317" y="421" textLength="109.8" lengthAdjust="spacingAndGlyphs" style="font-family:'Liberation Serif',serif;font-size:13.8px" fill="#b9b9b9" stroke="#b9b9b9" stroke-width="0.25">ВЕЧНАЯ ПАМЯТЬ</text>
<text x="331.5" y="435" textLength="80.8" lengthAdjust="spacingAndGlyphs" style="font-family:'Liberation Serif',serif;font-size:13.8px" fill="#b9b9b9" stroke="#b9b9b9" stroke-width="0.25">ЛЮБИМОМУ</text></svg>
<div class="r" style="left:854.6px;top:65.5px;width:169.4px;height:471px;background:#3b3b3b;"></div>
<div class="r" style="left:854.6px;top:65.5px;width:1px;height:471px;background:#262626;"></div>
<div class="r" style="left:855px;top:77px;width:147px;height:1px;background:#2a2a2a;"></div>
<span class="t" style="left:858.00px;top:68.06px;font-size:8px;color:#ececec;font-weight:normal;font-family:'Liberation Sans',sans-serif;transform-origin:0 50%;transform:scaleX(0.8516);">Обрть спакосный</span>
<svg style="left:993.5px;top:69px" width="6" height="5.4" viewBox="0 0 6 5.4"><path d="M0.5 0.5L2.6 2.7 0.5 4.9M3 0.5L5.1 2.7 3 4.9" stroke="#9a9a9a" stroke-width="0.8" fill="none"/></svg>
<svg style="left:1004px;top:69.2px" width="5" height="5" viewBox="0 0 5 5"><path d="M0.5 0.5L4.5 4.5M4.5 0.5L0.5 4.5" stroke="#8a8a8a" stroke-width="0.8"/></svg>
<svg style="left:1015.2px;top:68.8px" width="6" height="6" viewBox="0 0 6 6"><path d="M0.6 0.6L5.4 5.4M5.4 0.6L0.6 5.4" stroke="#e0e0e0" stroke-width="1"/></svg>
<div class="r" style="left:858.4px;top:82.3px;width:139.6px;height:10.4px;background:#2a2a2a;"></div>
<svg style="left:861px;top:84.6px" width="7" height="6" viewBox="0 0 7 6"><path d="M2.4 0.4V4Q2.2 5.4 0.6 5" stroke="#8a8a8a" stroke-width="0.9" fill="none"/><path d="M3.8 1.6L5.2 2.8 3.8 4M5.4 1.6L6.6 2.8 5.4 4" stroke="#8a8a8a" stroke-width="0.6" fill="none"/></svg>
<span class="t" style="left:869.70px;top:83.97px;font-size:7.6px;color:#6c6c6c;font-weight:normal;font-family:'Liberation Sans',sans-serif;transform-origin:0 50%;transform:scaleX(0.8965);">Миапоне</span>
<div class="r" style="left:990px;top:82.3px;width:8px;height:10.4px;background:#474747;"></div>
<svg style="left:991.4px;top:85px" width="5.4" height="5.4" viewBox="0 0 5.4 5.4"><path d="M0.2 0.3H5.2L3.3 2.6V5L2.1 4.2V2.6Z" fill="#f0f0f0"/></svg>
<div class="r" style="left:858px;top:96.8px;width:140px;height:12.7px;background:#484848;"></div>
<svg style="left:861px;top:102px" width="4" height="4" viewBox="0 0 4 4"><path d="M3.6 0.4V3.6H0.4Z" fill="#e8e8e8"/></svg>
<span class="t" style="left:868.80px;top:99.87px;font-size:7.8px;color:#f4f4f4;font-weight:bold;font-family:'Liberation Sans',sans-serif;transform-origin:0 50%;transform:scaleX(0.8511);">Споль геоориня букет сполонюваный</span>
<svg style="left:875.8px;top:112.9px" width="9.4" height="9.4" viewBox="0 0 9.4 9.4"><rect x="0" y="0" width="9.4" height="9.4" fill="#bdbdbd"/><path d="M0 1.2H9.4M0 3.5H9.4M0 5.9H9.4M0 8.2H9.4" stroke="#8a8a8a" stroke-width="0.7" stroke-dasharray="1 0.8"/><path d="M1.2 0V9.4M3.5 0V9.4M5.9 0V9.4M8.2 0V9.4" stroke="#9a9a9a" stroke-width="0.6" stroke-dasharray="0.8 1"/><rect x="0.3" y="0.3" width="8.8" height="8.8" fill="none" stroke="#d8d8d8" stroke-width="0.6" stroke-dasharray="1 0.8"/></svg>
<span class="t" style="left:890.50px;top:114.17px;font-size:7.8px;color:#9a9a9a;font-weight:normal;font-family:'Liberation Sans',sans-serif;transform-origin:0 50%;transform:scaleX(0.8814);">Столь геодерии</span>
<svg style="left:875.8px;top:127px" width="9.4" height="9.4" viewBox="0 0 9.4 9.4"><rect x="0" y="0" width="9.4" height="9.4" fill="#bdbdbd"/><path d="M0 1.2H9.4M0 3.5H9.4M0 5.9H9.4M0 8.2H9.4" stroke="#8a8a8a" stroke-width="0.7" stroke-dasharray="1 0.8"/><path d="M1.2 0V9.4M3.5 0V9.4M5.9 0V9.4M8.2 0V9.4" stroke="#9a9a9a" stroke-width="0.6" stroke-dasharray="0.8 1"/><rect x="0.3" y="0.3" width="8.8" height="8.8" fill="none" stroke="#d8d8d8" stroke-width="0.6" stroke-dasharray="1 0.8"/></svg>
<span class="t" style="left:890.50px;top:128.17px;font-size:7.8px;color:#a4a4a4;font-weight:normal;font-family:'Liberation Sans',sans-serif;transform-origin:0 50%;transform:scaleX(0.8390);">Вовоит</span>
<svg style="left:875.8px;top:141.7px" width="9.4" height="9.4" viewBox="0 0 9.4 9.4"><rect x="0" y="0" width="9.4" height="9.4" fill="#bdbdbd"/><rect x="0.3" y="0.3" width="8.8" height="8.8" fill="none" stroke="#d8d8d8" stroke-width="0.6" stroke-dasharray="1 0.8"/></svg>
<span class="t" style="left:890.50px;top:142.97px;font-size:7.8px;color:#a4a4a4;font-weight:normal;font-family:'Liberation Sans',sans-serif;transform-origin:0 50%;transform:scaleX(0.8445);">Букест</span>
<div class="r" style="left:858px;top:160px;width:140px;height:1px;background:#2a2a2a;"></div>
<svg style="left:876.6px;top:168.6px" width="8" height="9" viewBox="0 0 8 9"><path d="M3.8 3V8.4" stroke="#c8c8c8" stroke-width="1.6"/><path d="M0.6 0.8H2M5.6 0.8H7M0.8 0.6V2.2M7 0.6V2.2" stroke="#aaa" stroke-width="0.7"/></svg>
<span class="t" style="left:890.00px;top:169.47px;font-size:7.6px;color:#7a7a7a;font-weight:normal;font-family:'Liberation Sans',sans-serif;transform-origin:0 50%;transform:scaleX(0.8779);">Resomonus</span>
<svg style="left:876.4px;top:183px" width="8.4" height="8.4" viewBox="0 0 8.4 8.4"><rect x="0.5" y="0.5" width="7.4" height="7.4" rx="0.8" stroke="#9a9a9a" stroke-width="0.9" fill="none"/><path d="M0.5 2.4H7.9" stroke="#9a9a9a" stroke-width="0.9"/><rect x="2" y="3.8" width="1.6" height="2.8" fill="#9a9a9a"/><rect x="4.6" y="3.8" width="1.8" height="2.8" fill="#9a9a9a"/></svg>
<span class="t" style="left:890.00px;top:183.77px;font-size:7.6px;color:#7a7a7a;font-weight:normal;font-family:'Liberation Sans',sans-serif;transform-origin:0 50%;transform:scaleX(0.8850);">Ропюпа</span>
<div class="r" style="left:858px;top:195.3px;width:140px;height:1px;background:#2a2a2a;"></div>
<div class="r" style="left:1002px;top:78px;width:10.6px;height:108px;background:#47505e;"></div>
<div class="r" style="left:1002px;top:186px;width:10.6px;height:351px;background:#3a3a3a;"></div>
<div class="r" style="left:1001.2px;top:78px;width:1px;height:471px;background:#2a2a2a;"></div>
<svg style="left:1003.6px;top:80px" width="8" height="8" viewBox="0 0 8 8"><path d="M0.6 3L3 0.8 3 6.4 0.6 7.4Z" fill="#7ea6d8"/><path d="M4 0.8L7 1.6V7L4 6.2Z" fill="#a8c8ee"/><path d="M3 3.4H5.6" stroke="#fff" stroke-width="0.8"/></svg>
<span class="t" style="left:1007.2px;top:92px;font-size:5.6px;color:#dcdcdc;transform-origin:0 0;transform:rotate(90deg) scaleX(1.0209) translate(0,-50%);">Фвиасюя</span>
<span class="t" style="left:1007.4px;top:120px;font-size:7.6px;color:#e8e8e8;transform-origin:0 0;transform:rotate(90deg) scaleX(1.3853) translate(0,-50%);">Сощучачиил</span>
<div class="r" style="left:1012.6px;top:78px;width:11.4px;height:459px;background:#3a3a3a;"></div>
<div class="r" style="left:1013.6px;top:92.9px;width:10.4px;height:9.8px;background:#e6e6e6;"></div>
<svg style="left:1016.2px;top:96px" width="5" height="4" viewBox="0 0 5 4"><path d="M0.5 3L2.4 0.8 4.3 3" stroke="#444" stroke-width="0.9" fill="none"/></svg>
<div class="r" style="left:1013.6px;top:102.7px;width:10.4px;height:9.44px;background:#2b2b2b;"></div>
<div class="r" style="left:1013.6px;top:112.09px;width:10.4px;height:9.44px;background:#3a3a3a;"></div>
<div class="r" style="left:1013.6px;top:121.48px;width:10.4px;height:9.44px;background:#4a4a4a;"></div>
<div class="r" style="left:1013.6px;top:130.87px;width:10.4px;height:9.44px;background:#5a5a5a;"></div>
<div class="r" style="left:1013.6px;top:140.26px;width:10.4px;height:9.44px;background:#6e6e6e;"></div>
<div class="r" style="left:1013.6px;top:149.65px;width:10.4px;height:9.44px;background:#7e7e7e;"></div>
<div class="r" style="left:1013.6px;top:159.04px;width:10.4px;height:9.44px;background:#909090;"></div>
<div class="r" style="left:1013.6px;top:168.43px;width:10.4px;height:9.44px;background:#a6a6a6;"></div>
<div class="r" style="left:1013.6px;top:177.82px;width:10.4px;height:9.44px;background:#b6b6b6;"></div>
<div class="r" style="left:1013.6px;top:187.21px;width:10.4px;height:9.44px;background:#cfcfcf;"></div>
<div class="r" style="left:1013.6px;top:196.6px;width:10.4px;height:9.44px;background:#e9e9e9;"></div>
<div class="r" style="left:1013.6px;top:205.99px;width:10.4px;height:9.44px;background:#2a35a0;"></div>
<div class="r" style="left:1013.6px;top:215.38px;width:10.4px;height:9.44px;background:#29b6d8;"></div>
<div class="r" style="left:1013.6px;top:224.77px;width:10.4px;height:9.44px;background:#1fae4b;"></div>
<div class="r" style="left:1013.6px;top:234.16px;width:10.4px;height:9.44px;background:#f7e81c;"></div>
<div class="r" style="left:1013.6px;top:243.55px;width:10.4px;height:9.44px;background:#ee1c25;"></div>
<div class="r" style="left:1013.6px;top:252.94px;width:10.4px;height:9.44px;background:#c812a8;"></div>
<div class="r" style="left:1013.6px;top:262.33px;width:10.4px;height:9.44px;background:#a0169c;"></div>
<div class="r" style="left:1013.6px;top:271.72px;width:10.4px;height:9.44px;background:#f07a28;"></div>
<div class="r" style="left:1013.6px;top:281.11px;width:10.4px;height:9.44px;background:#f6bfa8;"></div>
<div class="r" style="left:1013.6px;top:290.5px;width:10.4px;height:9.44px;background:#f0b8c0;"></div>
<div class="r" style="left:1013.6px;top:299.89px;width:10.4px;height:9.44px;background:#4d4780;"></div>
<div class="r" style="left:1013.6px;top:309.28px;width:10.4px;height:9.44px;background:#d6d4e2;"></div>
<div class="r" style="left:1013.6px;top:318.67px;width:10.4px;height:9.44px;background:#aaa6d0;"></div>
<div class="r" style="left:1013.6px;top:328.06px;width:10.4px;height:9.44px;background:#8c84c0;"></div>
<div class="r" style="left:1013.6px;top:337.45px;width:10.4px;height:9.44px;background:#7068b6;"></div>
<div class="r" style="left:1013.6px;top:346.84px;width:10.4px;height:9.44px;background:#5a54a0;"></div>
<div class="r" style="left:1013.6px;top:356.23px;width:10.4px;height:9.44px;background:#6a7cb0;"></div>
<div class="r" style="left:1013.6px;top:365.62px;width:10.4px;height:9.44px;background:#c4cce8;"></div>
<div class="r" style="left:1013.6px;top:375.01px;width:10.4px;height:9.44px;background:#7a76c0;"></div>
<div class="r" style="left:1013.6px;top:384.4px;width:10.4px;height:9.44px;background:#6aa4cc;"></div>
<div class="r" style="left:1013.6px;top:393.79px;width:10.4px;height:9.44px;background:#a8d4e4;"></div>
<div class="r" style="left:1013.6px;top:403.18px;width:10.4px;height:9.44px;background:#2e9aaa;"></div>
<div class="r" style="left:1013.6px;top:412.57px;width:10.4px;height:9.44px;background:#24308e;"></div>
<div class="r" style="left:1013.6px;top:421.96px;width:10.4px;height:9.44px;background:#1e4a9a;"></div>
<div class="r" style="left:1013.6px;top:431.35px;width:10.4px;height:9.44px;background:#3a9a9e;"></div>
<div class="r" style="left:1013.6px;top:440.74px;width:10.4px;height:9.44px;background:#d0e0c8;"></div>
<div class="r" style="left:1013.6px;top:450.13px;width:10.4px;height:9.44px;background:#b8dcb0;"></div>
<div class="r" style="left:1013.6px;top:459.52px;width:10.4px;height:9.44px;background:#90cc98;"></div>
<div class="r" style="left:1013.6px;top:468.91px;width:10.4px;height:9.44px;background:#8cc078;"></div>
<div class="r" style="left:1013.6px;top:478.3px;width:10.4px;height:9.44px;background:#98a868;"></div>
<div class="r" style="left:1013.6px;top:487.69px;width:10.4px;height:9.44px;background:#3a7a48;"></div>
<div class="r" style="left:1013.6px;top:497.08px;width:10.4px;height:9.44px;background:#4aa860;"></div>
<div class="r" style="left:1013.6px;top:506.47px;width:10.4px;height:9.44px;background:#6cc878;"></div>
<div class="r" style="left:1013.6px;top:515.86px;width:10.4px;height:6.3px;background:#3c9858;"></div>
<svg style="left:1005.5px;top:527.5px" width="6" height="5" viewBox="0 0 6 5"><path d="M0.5 2.5H3M2 0.8L3.8 2.5 2 4.2M4 0.8L5.6 2.5 4 4.2" stroke="#ddd" stroke-width="0.7" fill="none"/></svg>
<svg style="left:1007.6px;top:538px" width="2" height="7" viewBox="0 0 2 7"><path d="M1 0V7" stroke="#777" stroke-width="0.8" stroke-dasharray="1 1"/></svg>
<div class="r" style="left:855px;top:536.4px;width:147px;height:0.8px;background:#262626;"></div>
<div class="r" style="left:511px;top:154.5px;width:325px;height:277px;background:#404040;box-sizing:border-box;border:1px solid #b2b2b2;box-shadow:0 1px 4px rgba(0,0,0,0.35);"></div>
<span class="t" style="left:516.00px;top:161.60px;font-size:8.3px;color:#ececec;font-weight:normal;font-family:'Liberation Sans',sans-serif;transform-origin:0 50%;transform:scaleX(0.9658);">Спецификация Гранитного Памятника</span>
<svg style="left:822.8px;top:161px" width="6.4" height="6.4" viewBox="0 0 6.4 6.4"><path d="M0.6 0.6L5.8 5.8M5.8 0.6L0.6 5.8" stroke="#f4f4f4" stroke-width="1.1"/></svg>
<div class="r" style="left:517px;top:177.8px;width:171.5px;height:225px;background:#373737;box-sizing:border-box;border:1px solid #2c2c2c;"></div>
<div class="r" style="left:518px;top:192.8px;width:169.5px;height:13.4px;background:#585858;"></div>
<span class="t" style="left:534.40px;top:181.66px;font-size:8px;color:#f2f2f2;font-weight:normal;font-family:'Liberation Sans',sans-serif;letter-spacing:-0.023px;">Гранит Шаньси Блэк</span>
<span class="t" style="left:534.40px;top:195.76px;font-size:8px;color:#f2f2f2;font-weight:normal;font-family:'Liberation Sans',sans-serif;letter-spacing:-0.029px;">Букет цветов (Розы)</span>
<span class="t" style="left:534.40px;top:209.86px;font-size:8px;color:#f2f2f2;font-weight:normal;font-family:'Liberation Sans',sans-serif;letter-spacing:0.023px;">Вид гравировки (Глубокая)</span>
<span class="t" style="left:534.40px;top:223.96px;font-size:8px;color:#f2f2f2;font-weight:normal;font-family:'Liberation Sans',sans-serif;letter-spacing:0.046px;">Крест (Церковный)</span>
<span class="t" style="left:534.40px;top:238.06px;font-size:8px;color:#f2f2f2;font-weight:normal;font-family:'Liberation Sans',sans-serif;letter-spacing:0.098px;">Дополнительные опции</span>
<div class="r" style="left:518px;top:388px;width:169.5px;height:13.8px;background:#4a4a4a;"></div>
<svg style="left:599.5px;top:391.5px" width="5.4" height="7.4" viewBox="0 0 5.4 7.4"><path d="M0.5 0.5L2.7 2.7 4.9 0.5M0.5 3.9L2.7 6.1 4.9 3.9" stroke="#cfcfcf" stroke-width="0.8" fill="none"/></svg>
<div class="r" style="left:691px;top:177.8px;width:137.3px;height:225.8px;background:#5f5f5f;"></div>
<svg style="left:0;top:0" width="1024" height="572" viewBox="0 0 1024 572"><g transform="translate(594.16,145.14) scale(0.4475,0.4386)"><defs>
<radialGradient id="glowb" cx="50%" cy="50%" r="50%"><stop offset="0" stop-color="#8a8a8a"/><stop offset="0.55" stop-color="#7c7c7c"/><stop offset="0.72" stop-color="#5a5a5a"/><stop offset="0.87" stop-color="#2a2a2a"/><stop offset="1" stop-color="#000" stop-opacity="0"/></radialGradient>
<radialGradient id="glow2b" cx="50%" cy="50%" r="50%"><stop offset="0" stop-color="#7c7c7c"/><stop offset="0.6" stop-color="#5c5c5c"/><stop offset="1" stop-color="#000" stop-opacity="0"/></radialGradient>
<linearGradient id="facevb" x1="0" y1="0" x2="0" y2="1"><stop offset="0" stop-color="#ddd" stop-opacity="0.35"/><stop offset="0.45" stop-color="#ccc" stop-opacity="0"/><stop offset="0.8" stop-color="#555" stop-opacity="0.12"/><stop offset="1" stop-color="#333" stop-opacity="0.5"/></linearGradient>
<linearGradient id="hairb" x1="0" y1="0" x2="0" y2="1"><stop offset="0" stop-color="#6c6c6c"/><stop offset="0.3" stop-color="#505050"/><stop offset="1" stop-color="#343434"/></linearGradient>
<pattern id="tieb" width="1.6" height="1.6" patternUnits="userSpaceOnUse" patternTransform="rotate(40)"><rect width="1.6" height="1.6" fill="#3a3a3a"/><rect width="0.7" height="1.6" fill="#565656"/></pattern>
<radialGradient id="vigb" cx="50%" cy="50%" r="50%"><stop offset="0" stop-color="#fff"/><stop offset="0.78" stop-color="#fff"/><stop offset="1" stop-color="#000"/></radialGradient>
<linearGradient id="faceb" x1="0" y1="0" x2="1" y2="0"><stop offset="0" stop-color="#7c7c7c"/><stop offset="0.18" stop-color="#b0b0b0"/><stop offset="0.45" stop-color="#cdcdcd"/><stop offset="0.75" stop-color="#c6c6c6"/><stop offset="0.92" stop-color="#a4a4a4"/><stop offset="1" stop-color="#888"/></linearGradient>
<linearGradient id="bevb" x1="0" y1="0" x2="0" y2="1"><stop offset="0" stop-color="#6a6a6a"/><stop offset="0.1" stop-color="#525252"/><stop offset="1" stop-color="#4a4a4a"/></linearGradient>
<filter id="b1b" x="-10%" y="-10%" width="120%" height="120%"><feGaussianBlur stdDeviation="0.55"/></filter>
<filter id="b2b" x="-20%" y="-20%" width="140%" height="140%"><feGaussianBlur stdDeviation="3"/></filter>
<mask id="pmb"><ellipse cx="370.5" cy="206" rx="53" ry="66" fill="#fff" filter="url(#b2b)"/></mask>
</defs>
<path d="M277 443.4H467L473.7 456.5V498.5H270.5V456.5Z" fill="#050505" stroke="#b8b8b8" stroke-width="1.6"/>
<path d="M277 443.4H467L473.7 456.5H270.5Z" fill="#1c1c1c"/>
<path d="M270.5 456.8H473.7" stroke="#2e2e2e" stroke-width="0.8"/>
<path d="M283.9 450.5V121.5C300 109 325 100 346 100.3C372 100.6 398 115 420 121.5C435 125.8 448 127.8 459.7 128.8V450.5Z" fill="url(#bevb)" stroke="#b8b8b8" stroke-width="1.6"/>
<path d="M283.9 450.5V121.5L291.5 128.8V450.5Z" fill="#141414"/>
<path d="M459.7 450.5V128.8L452.4 136.7V450.5Z" fill="#090909"/>
<path d="M291.5 450.5V128.8C305 116 328 105.6 346 105.8C370 106.2 396 121.5 418 128.8C432 133.2 442 135.6 452.4 136.7V450.5Z" fill="#020202"/>
<path d="M291.5 128.8C305 116 328 105.6 346 105.8C370 106.2 396 121.5 418 128.8C432 133.2 442 135.6 452.4 136.7" stroke="#868686" stroke-width="0.7" fill="none"/>
<path d="M291.5 128.8V412Q291.2 428 284.2 432" stroke="#8c8c8c" stroke-width="1.1" fill="none"/>
<path d="M452.4 136.7V412Q452.8 428 459.6 432" stroke="#8c8c8c" stroke-width="1.1" fill="none"/>
<path d="M284 451H459.6" stroke="#555" stroke-width="0.8"/>
<g mask="url(#pmb)">
<ellipse cx="369.5" cy="188" rx="42" ry="51" fill="url(#glowb)"/>
<ellipse cx="370" cy="226" rx="50" ry="22" fill="url(#glow2b)"/>
<g filter="url(#b1b)">
<path d="M310 292V246Q312 232 328 227.5L351 214.5 370 240 389 214 412 226.5Q428 231 430 246V292Z" fill="#2f2f2f"/>
<path d="M328 227.5L351 214.5 353 219 335 232 318 250Z" fill="#3e3e3e"/><path d="M412 226.5L389 214 387 219 405 232 422 250Z" fill="#3a3a3a"/>
<path d="M351.5 215L370 224 388.5 214.5 384 250 377 278H363L357 250Z" fill="#c6c6c6"/>
<path d="M351.5 215L335 238 345 243 340 248 366 286H357L330 242Z" fill="#222"/><path d="M388.5 214.5L405 238 395 243 400 248 374 286H383L410 242Z" fill="#202020"/>
<path d="M351.5 215L336 238 346 243 362 262" stroke="#4c4c4c" stroke-width="0.8" fill="none"/><path d="M388.5 214.5L404 238 394 243 378.5 260" stroke="#484848" stroke-width="0.8" fill="none"/>
<path d="M364.3 233.4H375.7L374 241.8 378.6 264 376 276 370.5 282 365 276 362.6 264 367 241.8Z" fill="url(#tieb)"/><path d="M364.3 233.4H375.7L374 241.8H367Z" fill="#3c3c3c"/>
<path d="M352 214.6L363 228 364.4 233.6 362.4 246 355 231Z" fill="#dcdcdc"/><path d="M388 214.2L377 228 375.6 233.6 377.8 245.5 385 231Z" fill="#d6d6d6"/>
<path d="M355 204H386V220L376 230H365L355 220Z" fill="#8e8e8e"/>
<ellipse cx="345.6" cy="188.5" rx="2.4" ry="6.5" fill="#9c9c9c"/><ellipse cx="394.8" cy="188" rx="2.3" ry="6.5" fill="#a4a4a4"/>
<path d="M347.2 178Q346.5 159.5 370 158.5Q393.8 159.5 393.4 178Q393.8 195 390.2 205Q385 217 377 220.4Q370.4 222.4 364 220.4Q356 217 350.6 205Q346.8 195 347.2 178Z" fill="url(#faceb)"/>
<path d="M347.2 178Q346.5 159.5 370 158.5Q393.8 159.5 393.4 178Q393.8 195 390.2 205Q385 217 377 220.4Q370.4 222.4 364 220.4Q356 217 350.6 205Q346.8 195 347.2 178Z" fill="url(#facevb)"/>
<path d="M345 184Q340.5 152 370 149.6Q399.5 152 395.6 184Q395 174 391.5 168.5Q388 163 377 162.4Q362 161.6 354 165.4Q349.6 168 348 173Q346 178 345 184Z" fill="url(#hairb)"/>
<path d="M351 162Q358 153.4 372 152.6Q384 153 391.6 162" stroke="#8e8e8e" stroke-width="1" fill="none" opacity="0.8"/>
<path d="M353.4 164Q360 156.4 372 155.6Q382 156 389.4 163" stroke="#9a9a9a" stroke-width="0.9" fill="none" opacity="0.7"/>
<path d="M356 164.4Q362 159 372 158.4Q380 158.6 386.6 163" stroke="#848484" stroke-width="0.9" fill="none" opacity="0.7"/>
<path d="M348 170Q349 161 357 156" stroke="#484848" stroke-width="1.3" fill="none" opacity="0.8"/>
<path d="M393.4 172Q393 163 386 157.4" stroke="#4c4c4c" stroke-width="1.2" fill="none" opacity="0.7"/>
<ellipse cx="359.6" cy="183.6" rx="6.4" ry="3.6" fill="#747474" opacity="0.6"/><ellipse cx="381" cy="183.6" rx="6.4" ry="3.6" fill="#747474" opacity="0.55"/>
<path d="M352.5 181Q358.5 178.6 365.5 181M375.5 180.8Q382 178.6 389 181.2" stroke="#4a4a4a" stroke-width="1.5" fill="none"/>
<ellipse cx="359.8" cy="184.9" rx="2.8" ry="1.2" fill="#3a3a3a"/><ellipse cx="380.8" cy="184.9" rx="2.8" ry="1.2" fill="#3a3a3a"/>
<path d="M367.4 185Q366.4 191 365.4 196.4Q365.6 198.2 367.6 198.6" stroke="#8e8e8e" stroke-width="1.6" fill="none" opacity="0.8"/><path d="M365.8 198.6Q367.4 199.8 369 198.8M372.4 198.8Q374 199.8 375.4 198.4" stroke="#505050" stroke-width="1.1" fill="none"/><ellipse cx="371" cy="193" rx="2" ry="4.4" fill="#dcdcdc" opacity="0.7"/>
<path d="M364 199.6Q361.6 203 360.4 207M376.4 199.6Q379 203 380.6 207" stroke="#9a9a9a" stroke-width="1.2" fill="none" opacity="0.55"/>
<path d="M361.4 206.4Q370.4 205 379.6 206.4" stroke="#454545" stroke-width="1.25" fill="none"/><path d="M364.4 210Q370.4 211.6 376.8 210" stroke="#8e8e8e" stroke-width="1" fill="none"/>
<path d="M349 186Q349.5 202 358 214" stroke="#7a7a7a" stroke-width="3" fill="none" opacity="0.45"/><path d="M392 186Q391.5 202 383.5 214" stroke="#8a8a8a" stroke-width="2.4" fill="none" opacity="0.35"/>
<path d="M361 217.5Q370.4 223.5 380 217.5" stroke="#777" stroke-width="2" fill="none" opacity="0.6"/>
</g></g>
<path d="M427.2 143.3H431.3V147.8H435.6V152.7H431.3V157.2H442.3V162.5H431.3V182L435 184.5V188.8L431.3 186.3V195.1H427.2V183.4L423.3 180.8V176.6L427.2 179.2V162.5H416.2V157.2H427.2V152.7H422.4V147.8H427.2Z" stroke="#cdcdcd" stroke-width="0.95" fill="none"/>
<text x="325.8" y="306.3" textLength="93.2" lengthAdjust="spacingAndGlyphs" style="font-family:'Liberation Serif',serif;font-size:29.8px" fill="#b9b9b9" stroke="#b9b9b9" stroke-width="0.25">Иванов</text>
<text x="346.9" y="329" textLength="49.1" lengthAdjust="spacingAndGlyphs" style="font-family:'Liberation Serif',serif;font-size:22px" fill="#b9b9b9" stroke="#b9b9b9" stroke-width="0.25">Пётр</text>
<text x="320.5" y="350.2" textLength="102" lengthAdjust="spacingAndGlyphs" style="font-family:'Liberation Serif',serif;font-size:21.6px" fill="#b9b9b9" stroke="#b9b9b9" stroke-width="0.25">Сергеевич</text>
<text x="325.8" y="370.5" textLength="91.2" lengthAdjust="spacingAndGlyphs" style="font-family:'Liberation Serif',serif;font-size:16.8px" fill="#b9b9b9" stroke="#b9b9b9" stroke-width="0.25">(1950–2023)</text>
<g transform="translate(372,401) scale(1.3) translate(-372,-391)" stroke="#7e7e7e" fill="none" stroke-width="1.1" stroke-linecap="round"><path d="M335.7 396Q352 394.4 377 389.5L389 384.8M336.6 399.2Q355 393 388 396L392.7 397M343.5 392.3Q366 391 390 391.8"/><path d="M365.8 391.3L374.2 384.4 366.7 384M375 390L381.6 384M355.6 396.4L364 400M366.7 397L380.7 405.2M373.2 399.7L369.5 403.4M352 393L360.5 388.6" stroke-width="1.2"/><path d="M386 386.4L390.6 383 391.6 386.6ZM389 396.2L393.6 394 393.6 399.4Z" fill="#808080" stroke-width="0.6"/><g stroke-linecap="butt"><circle cx="393.2" cy="382.5" r="1.7" fill="#8a8a8a" stroke="#2c2c2c" stroke-width="0.35"/><circle cx="394.6" cy="379.6" r="1.6" fill="#7c7c7c" stroke="#2c2c2c" stroke-width="0.35"/><circle cx="396.9" cy="381.6" r="1.2" fill="#8a8a8a" stroke="#2c2c2c" stroke-width="0.35"/><circle cx="392.9" cy="380.5" r="1.6" fill="#7c7c7c" stroke="#2c2c2c" stroke-width="0.35"/><circle cx="391.6" cy="378.3" r="1.2" fill="#6e6e6e" stroke="#2c2c2c" stroke-width="0.35"/><circle cx="396.1" cy="381.6" r="1.6" fill="#7c7c7c" stroke="#2c2c2c" stroke-width="0.35"/><circle cx="393.6" cy="382.6" r="1.2" fill="#969696" stroke="#2c2c2c" stroke-width="0.35"/><circle cx="390.5" cy="379.5" r="1.2" fill="#7c7c7c" stroke="#2c2c2c" stroke-width="0.35"/><circle cx="391.6" cy="383.3" r="1.2" fill="#8a8a8a" stroke="#2c2c2c" stroke-width="0.35"/><circle cx="391.6" cy="378.7" r="1.6" fill="#969696" stroke="#2c2c2c" stroke-width="0.35"/><circle cx="389.7" cy="381.8" r="1.4" fill="#7c7c7c" stroke="#2c2c2c" stroke-width="0.35"/><circle cx="395.1" cy="377.2" r="1.3" fill="#969696" stroke="#2c2c2c" stroke-width="0.35"/><circle cx="389.8" cy="380.2" r="1.8" fill="#969696" stroke="#2c2c2c" stroke-width="0.35"/><circle cx="393.0" cy="380.1" r="1.6" fill="#7c7c7c" stroke="#2c2c2c" stroke-width="0.35"/><circle cx="394.1" cy="379.1" r="1.5" fill="#8a8a8a" stroke="#2c2c2c" stroke-width="0.35"/><circle cx="395.2" cy="380.6" r="1.6" fill="#969696" stroke="#2c2c2c" stroke-width="0.35"/><circle cx="392.5" cy="383.2" r="1.5" fill="#6e6e6e" stroke="#2c2c2c" stroke-width="0.35"/><circle cx="395.3" cy="381.5" r="1.3" fill="#8a8a8a" stroke="#2c2c2c" stroke-width="0.35"/><circle cx="397.6" cy="382.3" r="1.7" fill="#6e6e6e" stroke="#2c2c2c" stroke-width="0.35"/><circle cx="393.4" cy="383.7" r="1.7" fill="#8a8a8a" stroke="#2c2c2c" stroke-width="0.35"/><circle cx="396.6" cy="379.9" r="1.6" fill="#6e6e6e" stroke="#2c2c2c" stroke-width="0.35"/><circle cx="397.8" cy="382.4" r="1.2" fill="#7c7c7c" stroke="#2c2c2c" stroke-width="0.35"/><circle cx="390.5" cy="383.5" r="1.5" fill="#7c7c7c" stroke="#2c2c2c" stroke-width="0.35"/><circle cx="390.8" cy="382.0" r="1.9" fill="#6e6e6e" stroke="#2c2c2c" stroke-width="0.35"/><circle cx="395.6" cy="379.1" r="1.5" fill="#969696" stroke="#2c2c2c" stroke-width="0.35"/><circle cx="392.8" cy="378.3" r="1.3" fill="#8a8a8a" stroke="#2c2c2c" stroke-width="0.35"/><circle cx="395.0" cy="382.9" r="1.3" fill="#6e6e6e" stroke="#2c2c2c" stroke-width="0.35"/><circle cx="395.0" cy="379.2" r="1.4" fill="#7c7c7c" stroke="#2c2c2c" stroke-width="0.35"/><circle cx="391.6" cy="382.3" r="1.6" fill="#7c7c7c" stroke="#2c2c2c" stroke-width="0.35"/><circle cx="392.8" cy="377.8" r="1.7" fill="#8a8a8a" stroke="#2c2c2c" stroke-width="0.35"/><circle cx="395.6" cy="399.6" r="2.0" fill="#6e6e6e" stroke="#2c2c2c" stroke-width="0.35"/><circle cx="397.8" cy="400.7" r="1.5" fill="#6e6e6e" stroke="#2c2c2c" stroke-width="0.35"/><circle cx="401.9" cy="398.1" r="1.3" fill="#7c7c7c" stroke="#2c2c2c" stroke-width="0.35"/><circle cx="403.9" cy="401.8" r="1.2" fill="#7c7c7c" stroke="#2c2c2c" stroke-width="0.35"/><circle cx="395.3" cy="395.1" r="1.7" fill="#8a8a8a" stroke="#2c2c2c" stroke-width="0.35"/><circle cx="403.7" cy="392.0" r="1.2" fill="#969696" stroke="#2c2c2c" stroke-width="0.35"/><circle cx="404.8" cy="395.2" r="1.5" fill="#8a8a8a" stroke="#2c2c2c" stroke-width="0.35"/><circle cx="403.8" cy="389.6" r="1.5" fill="#6e6e6e" stroke="#2c2c2c" stroke-width="0.35"/><circle cx="399.8" cy="400.5" r="1.8" fill="#969696" stroke="#2c2c2c" stroke-width="0.35"/><circle cx="396.0" cy="398.2" r="1.6" fill="#7c7c7c" stroke="#2c2c2c" stroke-width="0.35"/><circle cx="404.5" cy="395.1" r="1.2" fill="#8a8a8a" stroke="#2c2c2c" stroke-width="0.35"/><circle cx="400.8" cy="392.1" r="1.7" fill="#8a8a8a" stroke="#2c2c2c" stroke-width="0.35"/><circle cx="399.7" cy="392.7" r="1.4" fill="#7c7c7c" stroke="#2c2c2c" stroke-width="0.35"/><circle cx="399.0" cy="400.7" r="1.6" fill="#969696" stroke="#2c2c2c" stroke-width="0.35"/><circle cx="397.7" cy="391.6" r="1.8" fill="#7c7c7c" stroke="#2c2c2c" stroke-width="0.35"/><circle cx="402.3" cy="389.2" r="1.8" fill="#7c7c7c" stroke="#2c2c2c" stroke-width="0.35"/><circle cx="401.8" cy="403.5" r="1.8" fill="#8a8a8a" stroke="#2c2c2c" stroke-width="0.35"/><circle cx="401.6" cy="390.9" r="1.3" fill="#969696" stroke="#2c2c2c" stroke-width="0.35"/><circle cx="395.5" cy="400.2" r="2.0" fill="#969696" stroke="#2c2c2c" stroke-width="0.35"/><circle cx="402.2" cy="398.7" r="1.5" fill="#969696" stroke="#2c2c2c" stroke-width="0.35"/><circle cx="401.9" cy="404.3" r="1.9" fill="#8a8a8a" stroke="#2c2c2c" stroke-width="0.35"/><circle cx="396.1" cy="398.2" r="1.8" fill="#8a8a8a" stroke="#2c2c2c" stroke-width="0.35"/><circle cx="401.6" cy="394.4" r="1.4" fill="#7c7c7c" stroke="#2c2c2c" stroke-width="0.35"/><circle cx="398.3" cy="397.7" r="1.8" fill="#969696" stroke="#2c2c2c" stroke-width="0.35"/><circle cx="405.3" cy="401.9" r="1.7" fill="#6e6e6e" stroke="#2c2c2c" stroke-width="0.35"/><circle cx="396.2" cy="402.5" r="1.8" fill="#7c7c7c" stroke="#2c2c2c" stroke-width="0.35"/><circle cx="401.5" cy="397.1" r="1.6" fill="#6e6e6e" stroke="#2c2c2c" stroke-width="0.35"/><circle cx="401.3" cy="393.8" r="1.8" fill="#6e6e6e" stroke="#2c2c2c" stroke-width="0.35"/><circle cx="398.8" cy="392.6" r="1.6" fill="#7c7c7c" stroke="#2c2c2c" stroke-width="0.35"/><circle cx="405.6" cy="398.3" r="1.8" fill="#8a8a8a" stroke="#2c2c2c" stroke-width="0.35"/><circle cx="395.3" cy="395.7" r="1.5" fill="#7c7c7c" stroke="#2c2c2c" stroke-width="0.35"/><circle cx="401.8" cy="393.4" r="1.3" fill="#969696" stroke="#2c2c2c" stroke-width="0.35"/><circle cx="395.7" cy="397.1" r="1.4" fill="#6e6e6e" stroke="#2c2c2c" stroke-width="0.35"/><circle cx="401.3" cy="395.2" r="1.8" fill="#6e6e6e" stroke="#2c2c2c" stroke-width="0.35"/><circle cx="398.0" cy="390.0" r="1.6" fill="#7c7c7c" stroke="#2c2c2c" stroke-width="0.35"/><circle cx="396.6" cy="395.8" r="1.1" fill="#6e6e6e" stroke="#2c2c2c" stroke-width="0.35"/><circle cx="401.3" cy="390.0" r="1.8" fill="#7c7c7c" stroke="#2c2c2c" stroke-width="0.35"/><circle cx="402.4" cy="402.9" r="1.8" fill="#8a8a8a" stroke="#2c2c2c" stroke-width="0.35"/><circle cx="398.7" cy="403.2" r="1.6" fill="#8a8a8a" stroke="#2c2c2c" stroke-width="0.35"/><circle cx="401.6" cy="395.7" r="1.3" fill="#8a8a8a" stroke="#2c2c2c" stroke-width="0.35"/><circle cx="401.2" cy="390.6" r="1.6" fill="#8a8a8a" stroke="#2c2c2c" stroke-width="0.35"/><circle cx="396.5" cy="399.8" r="1.6" fill="#7c7c7c" stroke="#2c2c2c" stroke-width="0.35"/><circle cx="399.3" cy="391.3" r="1.6" fill="#6e6e6e" stroke="#2c2c2c" stroke-width="0.35"/><circle cx="397.8" cy="397.0" r="1.6" fill="#969696" stroke="#2c2c2c" stroke-width="0.35"/><circle cx="405.3" cy="393.1" r="1.3" fill="#6e6e6e" stroke="#2c2c2c" stroke-width="0.35"/><circle cx="401.9" cy="399.7" r="1.5" fill="#8a8a8a" stroke="#2c2c2c" stroke-width="0.35"/><circle cx="398.9" cy="391.8" r="1.3" fill="#969696" stroke="#2c2c2c" stroke-width="0.35"/><circle cx="401.7" cy="388.5" r="1.2" fill="#969696" stroke="#2c2c2c" stroke-width="0.35"/><circle cx="403.9" cy="404.1" r="2.0" fill="#7c7c7c" stroke="#2c2c2c" stroke-width="0.35"/><circle cx="400.6" cy="394.3" r="1.9" fill="#7c7c7c" stroke="#2c2c2c" stroke-width="0.35"/><circle cx="405.7" cy="396.7" r="1.2" fill="#6e6e6e" stroke="#2c2c2c" stroke-width="0.35"/><circle cx="404.2" cy="397.0" r="1.5" fill="#969696" stroke="#2c2c2c" stroke-width="0.35"/><circle cx="398.6" cy="404.5" r="1.1" fill="#6e6e6e" stroke="#2c2c2c" stroke-width="0.35"/><circle cx="399.9" cy="397.7" r="1.4" fill="#969696" stroke="#2c2c2c" stroke-width="0.35"/></g></g></g></svg>
</body></html>
